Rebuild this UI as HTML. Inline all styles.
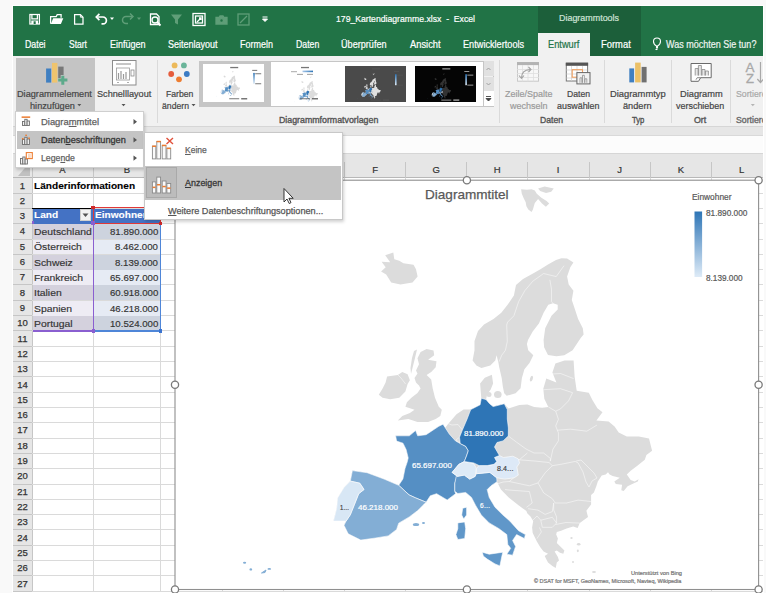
<!DOCTYPE html><html><head><meta charset="utf-8"><style>
html,body{margin:0;padding:0}
body{width:766px;height:593px;position:relative;overflow:hidden;background:#f9f9f9;font-family:"Liberation Sans",sans-serif}
div{box-sizing:border-box}
svg{position:absolute;left:0;top:0}
</style></head><body>
<div style="position:absolute;left:12px;top:5px;width:752px;height:588px;background:#ffffff;"></div>
<div style="position:absolute;left:13px;top:6px;width:750px;height:50px;background:#217346;"></div>
<div style="position:absolute;left:538px;top:6px;width:103px;height:50px;background:#1c5f3a;"></div>
<div style="position:absolute;left:538px;top:32.5px;width:52px;height:24px;background:#f1f1f1;"></div>
<div style="position:absolute;left:336.00px;top:13.74px;font-size:9.5px;line-height:9.5px;color:#ffffff;white-space:nowrap;transform-origin:0 0;transform:scaleX(0.9109);-webkit-text-stroke-width:0.2px;">179_Kartendiagramme.xlsx&nbsp; - &nbsp;Excel</div>
<div style="position:absolute;left:559.00px;top:13.79px;font-size:9px;line-height:9px;color:#cfe3d6;white-space:nowrap;transform-origin:0 0;transform:scaleX(0.9914);-webkit-text-stroke-width:0.2px;">Diagrammtools</div>
<div style="position:absolute;left:24.50px;top:39.90px;font-size:10.2px;line-height:10.2px;color:#ffffff;white-space:nowrap;transform-origin:0 0;transform:scaleX(0.8609);-webkit-text-stroke-width:0.2px;">Datei</div>
<div style="position:absolute;left:69.00px;top:39.90px;font-size:10.2px;line-height:10.2px;color:#ffffff;white-space:nowrap;transform-origin:0 0;transform:scaleX(0.8356);-webkit-text-stroke-width:0.2px;">Start</div>
<div style="position:absolute;left:109.60px;top:39.90px;font-size:10.2px;line-height:10.2px;color:#ffffff;white-space:nowrap;transform-origin:0 0;transform:scaleX(0.8841);-webkit-text-stroke-width:0.2px;">Einfügen</div>
<div style="position:absolute;left:167.80px;top:39.90px;font-size:10.2px;line-height:10.2px;color:#ffffff;white-space:nowrap;transform-origin:0 0;transform:scaleX(0.8817);-webkit-text-stroke-width:0.2px;">Seitenlayout</div>
<div style="position:absolute;left:240.00px;top:39.90px;font-size:10.2px;line-height:10.2px;color:#ffffff;white-space:nowrap;transform-origin:0 0;transform:scaleX(0.8821);-webkit-text-stroke-width:0.2px;">Formeln</div>
<div style="position:absolute;left:295.70px;top:39.90px;font-size:10.2px;line-height:10.2px;color:#ffffff;white-space:nowrap;transform-origin:0 0;transform:scaleX(0.8560);-webkit-text-stroke-width:0.2px;">Daten</div>
<div style="position:absolute;left:341.40px;top:39.90px;font-size:10.2px;line-height:10.2px;color:#ffffff;white-space:nowrap;transform-origin:0 0;transform:scaleX(0.8936);-webkit-text-stroke-width:0.2px;">Überprüfen</div>
<div style="position:absolute;left:410.00px;top:39.90px;font-size:10.2px;line-height:10.2px;color:#ffffff;white-space:nowrap;transform-origin:0 0;transform:scaleX(0.9148);-webkit-text-stroke-width:0.2px;">Ansicht</div>
<div style="position:absolute;left:462.80px;top:39.90px;font-size:10.2px;line-height:10.2px;color:#ffffff;white-space:nowrap;transform-origin:0 0;transform:scaleX(0.8997);-webkit-text-stroke-width:0.2px;">Entwicklertools</div>
<div style="position:absolute;left:601.00px;top:39.90px;font-size:10.2px;line-height:10.2px;color:#ffffff;white-space:nowrap;transform-origin:0 0;transform:scaleX(0.9225);-webkit-text-stroke-width:0.2px;">Format</div>
<div style="position:absolute;left:548.00px;top:39.90px;font-size:10.2px;line-height:10.2px;color:#217346;white-space:nowrap;transform-origin:0 0;transform:scaleX(0.9080);-webkit-text-stroke-width:0.2px;">Entwurf</div>
<div style="position:absolute;left:665.50px;top:39.90px;font-size:10.2px;line-height:10.2px;color:#eef4f0;white-space:nowrap;transform-origin:0 0;transform:scaleX(0.8852);-webkit-text-stroke-width:0.2px;">Was möchten Sie tun?</div>
<div style="position:absolute;left:13px;top:56px;width:750px;height:70px;background:#f1f1f1;"></div>
<div style="position:absolute;left:13px;top:125.5px;width:750px;height:1px;background:#d6d6d6;"></div>
<div style="position:absolute;left:13px;top:126.5px;width:750px;height:8px;background:#e6e6e6;"></div>
<div style="position:absolute;left:13px;top:134.5px;width:750px;height:1.5px;background:#d9d9d9;"></div>
<div style="position:absolute;left:13px;top:136px;width:750px;height:17px;background:#fcfcfc;"></div>
<div style="position:absolute;left:13px;top:153px;width:750px;height:1px;background:#d6d6d6;"></div>
<div style="position:absolute;left:13px;top:154px;width:750px;height:23px;background:#e6e6e6;"></div>
<div style="position:absolute;left:13px;top:177px;width:750px;height:1px;background:#b8b8b8;"></div>
<svg width="766" height="593" style="position:absolute;left:0;top:0">
<g fill="none" stroke="#ffffff" stroke-width="1.25">
 <rect x="29.9" y="14.5" width="9.5" height="9.5" />
 <path d="M31.9 14.5 v4.4 h5.5 v-4.4"/>
 <path d="M74.6 14.6 h5.8 l2.6 2.6 v6.8 h-8.4 z"/>
 <path d="M80.4 14.6 v2.6 h2.6" stroke-width="0.9"/>
 <path d="M97.3 17 h5.7 a3.4 3.4 0 0 1 0 6.8 h-1.5" stroke-width="1.7"/>
 <path d="M99.4 13.9 l-3.1 3.1 l3.1 3.1" stroke-width="1.7"/>
 <path d="M50.6 23.8 v-7.3 h5.6 l1 -1.8 h3.9 v3"/>
</g>
<rect x="31.3" y="20.5" width="6.7" height="3.5" fill="#fff"/>
<rect x="33.6" y="21.3" width="2.1" height="2.7" fill="#217346"/>
<path d="M50.8 24.1 L53.2 18.3 H63.3 L60.9 24.1 Z" fill="#fff"/>
<path d="M110 17.5 h4 l-2 2.5z" fill="#fff"/>
<g fill="none" stroke="#5f9e78" stroke-width="1.5">
 <path d="M132 16.5 h-6 a3.5 3.5 0 0 0 0 7 h2"/>
 <path d="M130 13.5 l3 3 l-3 3"/>
</g>
<path d="M137 17.5 h4 l-2 2.5z" fill="#5f9e78"/>
<g fill="none" stroke="#ffffff" stroke-width="1.3">
 <path d="M150.5 14 h6 l2.5 2.5 v8 h-8.5 z"/>
 <circle cx="155" cy="20" r="3"/>
 <path d="M157 22 l3.5 3.5" stroke-width="1.8"/>
 <rect x="193" y="13.5" width="12" height="12"/>
 <rect x="195.5" y="16" width="7" height="7"/>
 <path d="M197 22 l4 -4 M199 18 h2 v2"/>
</g>
<path d="M171 14.5 h11 l-4 5 v5 l-3 -1.5 v-3.5z" fill="#5f9e78"/>
<g fill="none" stroke="#5f9e78" stroke-width="1.3">
 <path d="M216 17.5 h3 l1 -1.5 h3 l1 1.5 h3 v6.5 h-11z" fill="#5f9e78"/>
 <circle cx="221.5" cy="20.5" r="1.9" fill="#217346"/>
 <rect x="238" y="14" width="11" height="11"/>
 <path d="M240 23 l7 -7"/>
</g>
<path d="M262.5 17 h5 M262.5 19 h5 l-2.5 2.5z" stroke="#fff" stroke-width="1" fill="#fff"/>
<!-- lightbulb -->
<g fill="none" stroke="#fff" stroke-width="1.1">
 <path d="M656.5 48 v-2 c-2 -1.2 -3 -2.8 -3 -4.5 a3.5 3.5 0 0 1 7 0 c0 1.7 -1 3.3 -3 4.5 v2 z"/>
 <path d="M655.5 49.5 h2"/>
</g>
</svg>
<div style="position:absolute;left:16px;top:58px;width:78.5px;height:53px;background:#c4c4c4;"></div>
<div style="position:absolute;left:156.5px;top:60px;width:1px;height:63px;background:#dadada;"></div>
<div style="position:absolute;left:499.2px;top:60px;width:1px;height:63px;background:#dadada;"></div>
<div style="position:absolute;left:604.2px;top:60px;width:1px;height:63px;background:#dadada;"></div>
<div style="position:absolute;left:671px;top:60px;width:1px;height:63px;background:#dadada;"></div>
<div style="position:absolute;left:730px;top:60px;width:1px;height:63px;background:#dadada;"></div>
<svg width="766" height="593" style="position:absolute;left:0;top:0">
 <rect x="46.1" y="68.5" width="5.1" height="14.1" fill="#3f7fc1"/>
 <rect x="52" y="62.9" width="5.4" height="19.7" fill="#efc46e"/>
 <rect x="58.2" y="66.6" width="5.4" height="12" fill="#787878"/>
 <path d="M62.8 75 v10 M57.7 80.1 h10.2" stroke="#c5c5c5" stroke-width="4.2"/>
 <path d="M62.8 75.8 v9 M58.2 80.1 h9.2" stroke="#5daa8b" stroke-width="3"/>
 <!-- Schnelllayout -->
 <rect x="112.5" y="60.5" width="23.5" height="24.5" fill="#fff" stroke="#8c8c8c" stroke-width="1"/>
 <path d="M116 64 h15" stroke="#8c8c8c" stroke-width="1"/>
 <rect x="116.5" y="68" width="13" height="12" fill="none" stroke="#9a9a9a" stroke-width="0.8"/>
 <path d="M118.5 79 v-6 M121 79 v-8 M123.5 79 v-5 M126 79 v-7" stroke="#9a9a9a" stroke-width="1.2"/>
 <rect x="131" y="70" width="3" height="6" fill="none" stroke="#8c8c8c" stroke-width="0.8"/>
 <path d="M117 82.5 h2 M127 82.5 h2" stroke="#999" stroke-width="0.8"/>
 <!-- Farben -->
 <circle cx="174.6" cy="65.4" r="2.9" fill="#ecb95a"/>
 <circle cx="183.9" cy="65.4" r="2.9" fill="#6bb59a"/>
 <circle cx="171.2" cy="74" r="2.9" fill="#e55c3c"/>
 <circle cx="186.8" cy="74" r="2.9" fill="#3c7cc4"/>
 <circle cx="179" cy="79.3" r="2.9" fill="#ed7d31"/>
 <!-- Zeile/Spalte disabled -->
 <rect x="517.5" y="62.6" width="21" height="18.6" fill="#f7f7f7" stroke="#c9c9c9" stroke-width="1"/>
 <rect x="517" y="62.1" width="22" height="3" fill="#b3b3b3"/>
 <path d="M517 69.5 h22 M517 73.5 h22 M517 77.5 h22 M522.5 65 v16.5 M528 65 v16.5 M533.5 65 v16.5" stroke="#dedede" stroke-width="0.8"/>
 <path d="M521.5 78 q0 -8 8.5 -8.5" fill="none" stroke="#a3a3a3" stroke-width="1.2"/>
 <path d="M528.5 67 l2.5 2.5 l-2.5 2.5 M519 75.5 l2.5 2.8 l2.5 -2.8" fill="none" stroke="#a3a3a3" stroke-width="1.1"/>
 <!-- Daten auswählen -->
 <rect x="566.3" y="63.2" width="21.3" height="17.8" fill="#fff" stroke="#777" stroke-width="1"/>
 <rect x="565.8" y="62.7" width="22.3" height="3.1" fill="#555"/>
 <path d="M566.3 70 h21 M566.3 74 h21 M566.3 78 h21 M571.5 66 v15 M577 66 v15 M582.5 66 v15" stroke="#cfcfcf" stroke-width="0.7"/>
 <rect x="572.2" y="69.7" width="10.3" height="7.5" fill="none" stroke="#f0a060" stroke-width="1.1"/>
 <rect x="576.9" y="72.6" width="13.1" height="11.3" fill="#f2f2f2" stroke="#666" stroke-width="1"/>
 <path d="M580 82.8 v-5 h1.8 v5 M582.5 82.8 v-7.5 h1.8 v7.5 M585 82.8 v-4 h1.8 v4" fill="#fff" stroke="#8a8a8a" stroke-width="0.8"/>
 <!-- Diagrammtyp -->
 <rect x="629.3" y="68.4" width="4.8" height="14" fill="#3f7fc1"/>
 <rect x="635.1" y="62.6" width="5.6" height="19.8" fill="#ebc067"/>
 <rect x="641.6" y="66.9" width="5" height="15.5" fill="#707070"/>
 <!-- Diagramm verschieben -->
 <path d="M691 63.5 h20.2 v14.2 h-10.5 l-2.2 3.6 h-7.5 z" fill="#fff" stroke="#6a6a6a" stroke-width="1" stroke-linejoin="round"/>
 <path d="M700.7 77.7 h-3.5 l-1.2 2" fill="none" stroke="#6a6a6a" stroke-width="0.8"/>
 <path d="M695.2 75.5 v-7 h3 v7 M698.4 75.5 v-10 h3 v10 M702 75.5 v-6 h3 v6 M705.4 75.5 v-4.5 h3 v4.5" fill="#e6e6e6" stroke="#8a8a8a" stroke-width="0.8"/>
 <!-- Sortieren -->
 <text x="745.6" y="71.6" font-size="13.5" fill="#a8a8a8" stroke="#a8a8a8" stroke-width="0.3" font-family="Liberation Sans">A</text>
 <text x="745.9" y="83" font-size="13" fill="#a8a8a8" stroke="#a8a8a8" stroke-width="0.3" font-family="Liberation Sans">Z</text>
 <path d="M760.5 62 v20.5 M757.3 79 l3.2 3.5 l3.2 -3.5" fill="none" stroke="#a8a8a8" stroke-width="1.2"/>
</svg>
<div style="position:absolute;left:199px;top:60.5px;width:295px;height:46px;background:#ffffff;border:1px solid #c6c6c6;"></div>
<div style="position:absolute;left:200px;top:61px;width:70.5px;height:45px;background:#c6c6c6;"></div>
<div style="position:absolute;left:203.2px;top:64.4px;width:61.3px;height:37.6px;background:#ffffff;"></div>
<svg width="766" height="593" style="position:absolute;left:0;top:0"><defs><linearGradient id="tg203" x1="0" y1="0" x2="0" y2="1"><stop offset="0" stop-color="#2e75b6"/><stop offset="1" stop-color="#deebf7"/></linearGradient></defs><rect x="230.2" y="66.9" width="8" height="1.3" fill="#555555" opacity="0.8"/><g transform="translate(200.25,58.66) scale(0.061,0.066)"><g fill="#d9d9d9" stroke="none"><path d="M521.1 189.2 L527.0 189.8 L531.6 189.2 L534.8 190.5 L536.8 193.7 L541.4 197.7 L546.6 200.9 L549.2 203.5 L545.9 206.8 L542.0 203.5 L538.1 199.0 L534.8 202.9 L532.9 209.4 L531.6 212.0 L528.3 209.4 L526.4 206.2 L525.7 202.2 L523.7 198.3 L521.8 193.7 Z"/><path d="M538.1 188.5 L544.6 186.6 L553.8 188.5 L551.2 191.8 L546.0 193.1 L540.1 191.1 Z"/><path d="M385.2 255.2 L393.3 252.6 L394.3 259.2 L399.3 260.7 L403.4 263.3 L413.5 264.8 L416.0 269.3 L417.6 276.4 L412.5 282.5 L400.4 284.5 L391.2 282.5 L386.2 274.4 L381.1 271.4 L385.7 267.3 L381.6 261.8 L390.2 262.3 Z"/><path d="M420.6 352.1 L426.6 349.1 L433.5 350.6 L434.2 355.2 L428.1 359.7 L436.5 361.3 L435.7 367.3 L431.2 371.9 L426.6 374.9 L431.2 379.5 L432.7 388.6 L435.0 397.7 L438.8 406.8 L441.8 409.8 L440.3 415.9 L435.7 419.0 L428.1 422.0 L417.5 422.0 L408.4 419.0 L397.8 420.5 L402.3 415.9 L409.9 412.9 L414.5 409.8 L405.4 406.8 L406.9 402.3 L411.4 397.7 L417.5 393.1 L420.6 388.6 L419.0 385.6 L416.0 382.5 L414.5 378.0 L417.5 373.4 L416.0 370.4 L419.0 364.3 L417.5 358.2 Z"/><path d="M387.1 376.4 L397.8 374.9 L402.3 371.9 L407.6 374.2 L409.9 380.2 L407.6 384.0 L405.4 391.6 L399.3 397.7 L390.2 399.2 L382.6 397.7 L378.8 394.7 L382.6 388.6 L385.6 382.5 Z"/><path d="M516.0 285.0 L523.0 279.0 L533.0 273.5 L540.0 269.5 L548.0 264.5 L556.0 260.0 L561.5 258.2 L567.1 258.6 L573.4 262.5 L570.3 267.2 L567.1 276.6 L568.7 284.5 L573.4 290.7 L571.8 300.1 L575.0 309.5 L578.1 318.9 L582.8 328.3 L583.6 334.6 L580.7 338.0 L572.6 350.2 L564.3 355.3 L556.4 356.3 L548.0 355.0 L544.1 347.2 L543.6 339.9 L545.2 328.3 L551.5 315.8 L557.7 309.5 L557.7 304.8 L553.0 303.3 L548.3 304.8 L543.6 312.7 L538.9 323.6 L532.7 331.5 L528.0 339.9 L526.9 344.0 L528.2 350.3 L533.3 355.3 L529.5 362.9 L524.4 369.2 L521.9 378.1 L520.6 388.2 L515.6 393.3 L506.7 395.8 L504.2 393.3 L502.9 386.9 L501.7 378.1 L499.1 366.7 L498.5 362.9 L496.6 355.3 L495.3 360.4 L490.3 365.4 L481.4 368.0 L476.4 365.4 L472.6 360.4 L474.5 350.3 L474.5 341.0 L478.0 331.0 L484.0 324.5 L493.5 318.9 L501.3 312.7 L507.6 304.8 L513.9 295.4 Z"/><path d="M443.5 430.0 L448.3 423.7 L456.5 414.3 L463.6 409.6 L470.7 409.6 L475.4 407.2 L480.1 404.8 L481.3 398.3 L480.1 383.6 L484.8 377.7 L491.9 374.7 L493.1 383.6 L490.7 389.5 L487.2 394.2 L486.0 399.5 L489.6 403.7 L493.1 406.6 L500.2 404.8 L504.3 403.7 L508.5 408.5 L519.3 405.1 L527.4 404.4 L534.1 407.1 L542.2 407.8 L548.3 406.9 L544.3 398.8 L543.3 388.7 L546.3 378.6 L556.4 382.6 L552.4 372.5 L555.4 363.4 L564.5 360.4 L573.6 360.4 L574.6 376.5 L576.7 390.7 L588.8 392.7 L592.4 400.1 L597.4 408.2 L602.5 412.3 L596.4 420.4 L608.6 421.4 L614.6 426.4 L618.7 432.5 L626.8 436.5 L638.9 436.5 L649.0 438.6 L652.1 450.7 L646.4 455.0 L644.8 459.7 L637.0 466.0 L630.7 470.7 L626.8 474.6 L630.7 480.1 L634.6 481.6 L638.6 479.3 L637.8 481.6 L633.9 483.2 L627.6 486.3 L623.7 491.0 L621.3 490.2 L622.1 484.8 L615.8 484.0 L614.3 481.6 L619.8 477.7 L612.7 476.1 L609.6 474.6 L608.0 472.2 L605.7 474.6 L601.7 475.4 L597.8 481.6 L596.3 486.3 L593.9 492.6 L591.1 495.0 L591.1 504.4 L586.4 510.7 L588.0 516.9 L579.8 523.1 L577.6 528.1 L573.2 526.4 L566.6 528.6 L561.1 530.8 L556.8 531.9 L556.2 534.6 L557.9 538.5 L556.8 542.9 L561.1 547.2 L564.4 550.5 L563.3 553.8 L560.0 552.7 L556.8 550.5 L554.6 551.6 L557.9 557.1 L559.0 560.4 L556.8 562.6 L555.7 568.0 L552.4 565.9 L548.0 562.6 L545.8 558.2 L544.7 556.0 L548.0 553.8 L543.6 551.6 L540.3 547.2 L537.0 541.8 L534.9 537.4 L532.7 533.0 L532.1 527.5 L533.2 521.0 L530.5 516.6 L527.2 513.3 L526.4 511.1 L518.5 505.2 L508.7 497.4 L500.9 489.6 L497.0 481.7 L491.1 485.7 L487.2 489.6 L489.2 497.4 L495.0 507.2 L502.9 515.0 L509.7 520.9 L518.5 530.7 L525.4 534.6 L524.4 538.5 L516.6 534.6 L512.6 540.5 L515.6 546.4 L512.6 555.2 L506.8 554.2 L510.7 548.3 L507.8 544.4 L506.8 534.6 L499.0 528.7 L489.2 522.9 L481.3 515.0 L475.5 505.2 L471.5 497.4 L465.7 492.5 L457.8 493.5 L454.8 491.3 L455.6 493.7 L447.2 500.0 L436.6 493.7 L430.3 495.8 L426.1 502.2 L424.0 504.3 L417.7 510.6 L409.3 516.9 L398.7 523.2 L396.6 529.5 L388.2 535.9 L375.6 538.0 L360.8 540.1 L348.2 533.8 L344.0 525.3 L346.1 521.1 L333.4 521.1 L336.6 508.5 L337.6 497.9 L344.0 487.4 L350.3 481.1 L352.4 470.6 L367.1 472.7 L384.0 479.0 L398.7 485.3 L402.9 479.0 L405.0 468.5 L407.2 462.1 L408.2 457.9 L406.1 449.5 L403.0 443.2 L396.6 441.1 L395.6 435.8 L409.3 435.8 L415.6 430.5 L417.7 435.8 L426.1 434.7 L438.8 426.3 L443.0 424.2 Z"/><ellipse cx="489" cy="394.5" rx="2.5" ry="2.5"/><ellipse cx="497.8" cy="394.5" rx="3.8" ry="3.6"/><ellipse cx="531.4" cy="378.7" rx="1.4" ry="3" transform="rotate(20 531.4 378.7)"/><path d="M414 351 L417 349.5 L414.5 360 L412.5 368 L411 374 L410.5 368 L412 358Z"/><ellipse cx="578.7" cy="544.3" rx="1.8" ry="1.2"/><ellipse cx="577.8" cy="550.8" rx="1" ry="1.4"/><ellipse cx="571.5" cy="538" rx="1.2" ry="0.9"/><ellipse cx="594" cy="572" rx="2" ry="1"/><ellipse cx="573" cy="562" rx="1" ry="1"/></g><g stroke="#ffffff" stroke-width="2" stroke-linejoin="round"><path d="M395.6 435.8 L409.3 435.8 L415.6 430.5 L417.7 435.8 L426.1 434.7 L438.8 426.3 L443.0 424.2 L449.3 434.0 L455.6 441.0 L460.2 443.5 L465.7 446.3 L468.3 450.8 L466.5 456.0 L464.3 461.6 L458.9 464.3 L452.1 472.4 L457.5 476.4 L454.8 483.2 L454.8 491.3 L455.6 493.7 L447.2 500.0 L436.6 493.7 L430.3 495.8 L426.1 502.2 L415.6 497.9 L409.1 494.9 L398.7 485.3 L402.9 479.0 L405.0 468.5 L407.2 462.1 L408.2 457.9 L406.1 449.5 L403.0 443.2 L396.6 441.1 Z" fill="#558fc4"/><path d="M352.4 470.6 L367.1 472.7 L384.0 479.0 L398.7 485.3 L409.1 494.9 L415.6 497.9 L426.1 502.2 L424.0 504.3 L417.7 510.6 L409.3 516.9 L398.7 523.2 L396.6 529.5 L388.2 535.9 L375.6 538.0 L360.8 540.1 L348.2 533.8 L344.0 525.3 L346.1 521.1 L350.3 514.8 L354.5 504.3 L358.7 493.7 L364.0 489.5 L359.8 483.2 L350.3 481.1 Z" fill="#83aed5"/><path d="M350.3 481.1 L359.8 483.2 L364.0 489.5 L358.7 493.7 L354.5 504.3 L350.3 514.8 L346.1 521.1 L333.4 521.1 L336.6 508.5 L337.6 497.9 L344.0 487.4 Z" fill="#d8e7f5"/><path d="M456.2 476.4 L464.3 475.1 L469.7 479.1 L475.1 476.4 L476.4 473.7 L489.9 472.4 L496.7 477.8 L497.0 481.7 L491.1 485.7 L487.2 489.6 L489.2 497.4 L495.0 507.2 L502.9 515.0 L509.7 520.9 L518.5 530.7 L525.4 534.6 L524.4 538.5 L516.6 534.6 L512.6 540.5 L515.6 546.4 L512.6 555.2 L506.8 554.2 L510.7 548.3 L507.8 544.4 L506.8 534.6 L499.0 528.7 L489.2 522.9 L481.3 515.0 L475.5 505.2 L471.5 497.4 L465.7 492.5 L457.8 493.5 L454.8 491.3 L454.8 483.2 Z" fill="#6097c9"/><path d="M482.3 552.2 L489.2 554.2 L502.9 552.2 L501.9 556.1 L499.9 565.9 L495.0 563.9 L487.2 559.1 L483.3 556.1 Z" fill="#6097c9"/><path d="M457.8 522.9 L464.7 521.9 L465.7 528.7 L464.7 538.5 L457.8 539.5 L455.9 534.6 L457.8 528.7 Z" fill="#6097c9"/><path d="M462.7 508.2 L466.6 507.2 L466.6 515.0 L463.7 518.9 L461.7 515.0 Z" fill="#6097c9"/><path d="M452.1 472.4 L458.9 464.3 L464.3 461.6 L473.7 463.6 L476.4 468.3 L475.1 476.4 L469.7 479.1 L464.3 475.1 L457.5 476.4 Z" fill="#deebf7"/><path d="M476.4 468.3 L479.1 465.6 L487.2 465.6 L494.0 464.3 L496.7 461.6 L494.5 457.5 L499.4 455.5 L503.4 457.5 L512.9 456.2 L518.3 458.9 L519.6 462.9 L516.9 467.0 L518.3 475.1 L514.2 477.8 L504.8 479.1 L496.7 477.8 L489.9 472.4 L476.4 473.7 Z" fill="#dde9f7"/><path d="M470.7 409.6 L475.4 407.2 L480.1 404.8 L481.3 398.3 L486.0 399.5 L489.6 403.7 L493.1 406.6 L500.2 404.8 L504.3 403.7 L507.3 409.6 L507.3 419.0 L508.4 428.0 L508.3 436.0 L503.1 440.9 L497.0 442.5 L494.5 447.0 L499.4 455.5 L494.5 457.5 L496.7 461.6 L494.0 464.3 L487.2 465.6 L479.1 465.6 L473.7 462.9 L464.3 461.6 L466.5 456.0 L468.3 450.8 L465.7 446.3 L460.2 443.5 L459.5 437.2 L462.4 430.0 L467.1 419.0 Z" fill="#2e75b6"/></g><g fill="#83aed5"><ellipse cx="416" cy="524.5" rx="3.2" ry="1.6"/><ellipse cx="423.5" cy="523" rx="1.5" ry="1"/><ellipse cx="244.6" cy="562.8" rx="1.6" ry="1"/><ellipse cx="250.8" cy="569.4" rx="1.3" ry="1.2"/><path d="M261.5 573 L266 570 L265 572.5Z" stroke="#83aed5" stroke-width="1"/><ellipse cx="269.3" cy="568.9" rx="1.8" ry="0.9"/></g></g><rect x="253.2" y="72.9" width="1.6" height="11" fill="url(#tg203)"/><rect x="252.2" y="69.9" width="5" height="0.8" fill="#555555"/><rect x="255.2" y="73.4" width="6" height="0.8" fill="#555555"/><rect x="255.2" y="83.4" width="6" height="0.8" fill="#555555"/><rect x="229.2" y="98.4" width="10" height="0.8" fill="#555555"/><rect x="241.2" y="98.2" width="6" height="1.2" fill="#555555"/></svg>
<svg width="766" height="593" style="position:absolute;left:0;top:0"><defs><linearGradient id="tg274" x1="0" y1="0" x2="1" y2="0"><stop offset="0" stop-color="#a9c8ea"/><stop offset="1" stop-color="#2e75b6"/></linearGradient></defs><rect x="301" y="66.9" width="8" height="1.3" fill="#555555" opacity="0.8"/><g transform="translate(278.05,64.16) scale(0.061,0.066)"><g fill="#dcdcdc" stroke="none"><path d="M521.1 189.2 L527.0 189.8 L531.6 189.2 L534.8 190.5 L536.8 193.7 L541.4 197.7 L546.6 200.9 L549.2 203.5 L545.9 206.8 L542.0 203.5 L538.1 199.0 L534.8 202.9 L532.9 209.4 L531.6 212.0 L528.3 209.4 L526.4 206.2 L525.7 202.2 L523.7 198.3 L521.8 193.7 Z"/><path d="M538.1 188.5 L544.6 186.6 L553.8 188.5 L551.2 191.8 L546.0 193.1 L540.1 191.1 Z"/><path d="M385.2 255.2 L393.3 252.6 L394.3 259.2 L399.3 260.7 L403.4 263.3 L413.5 264.8 L416.0 269.3 L417.6 276.4 L412.5 282.5 L400.4 284.5 L391.2 282.5 L386.2 274.4 L381.1 271.4 L385.7 267.3 L381.6 261.8 L390.2 262.3 Z"/><path d="M420.6 352.1 L426.6 349.1 L433.5 350.6 L434.2 355.2 L428.1 359.7 L436.5 361.3 L435.7 367.3 L431.2 371.9 L426.6 374.9 L431.2 379.5 L432.7 388.6 L435.0 397.7 L438.8 406.8 L441.8 409.8 L440.3 415.9 L435.7 419.0 L428.1 422.0 L417.5 422.0 L408.4 419.0 L397.8 420.5 L402.3 415.9 L409.9 412.9 L414.5 409.8 L405.4 406.8 L406.9 402.3 L411.4 397.7 L417.5 393.1 L420.6 388.6 L419.0 385.6 L416.0 382.5 L414.5 378.0 L417.5 373.4 L416.0 370.4 L419.0 364.3 L417.5 358.2 Z"/><path d="M387.1 376.4 L397.8 374.9 L402.3 371.9 L407.6 374.2 L409.9 380.2 L407.6 384.0 L405.4 391.6 L399.3 397.7 L390.2 399.2 L382.6 397.7 L378.8 394.7 L382.6 388.6 L385.6 382.5 Z"/><path d="M516.0 285.0 L523.0 279.0 L533.0 273.5 L540.0 269.5 L548.0 264.5 L556.0 260.0 L561.5 258.2 L567.1 258.6 L573.4 262.5 L570.3 267.2 L567.1 276.6 L568.7 284.5 L573.4 290.7 L571.8 300.1 L575.0 309.5 L578.1 318.9 L582.8 328.3 L583.6 334.6 L580.7 338.0 L572.6 350.2 L564.3 355.3 L556.4 356.3 L548.0 355.0 L544.1 347.2 L543.6 339.9 L545.2 328.3 L551.5 315.8 L557.7 309.5 L557.7 304.8 L553.0 303.3 L548.3 304.8 L543.6 312.7 L538.9 323.6 L532.7 331.5 L528.0 339.9 L526.9 344.0 L528.2 350.3 L533.3 355.3 L529.5 362.9 L524.4 369.2 L521.9 378.1 L520.6 388.2 L515.6 393.3 L506.7 395.8 L504.2 393.3 L502.9 386.9 L501.7 378.1 L499.1 366.7 L498.5 362.9 L496.6 355.3 L495.3 360.4 L490.3 365.4 L481.4 368.0 L476.4 365.4 L472.6 360.4 L474.5 350.3 L474.5 341.0 L478.0 331.0 L484.0 324.5 L493.5 318.9 L501.3 312.7 L507.6 304.8 L513.9 295.4 Z"/><path d="M443.5 430.0 L448.3 423.7 L456.5 414.3 L463.6 409.6 L470.7 409.6 L475.4 407.2 L480.1 404.8 L481.3 398.3 L480.1 383.6 L484.8 377.7 L491.9 374.7 L493.1 383.6 L490.7 389.5 L487.2 394.2 L486.0 399.5 L489.6 403.7 L493.1 406.6 L500.2 404.8 L504.3 403.7 L508.5 408.5 L519.3 405.1 L527.4 404.4 L534.1 407.1 L542.2 407.8 L548.3 406.9 L544.3 398.8 L543.3 388.7 L546.3 378.6 L556.4 382.6 L552.4 372.5 L555.4 363.4 L564.5 360.4 L573.6 360.4 L574.6 376.5 L576.7 390.7 L588.8 392.7 L592.4 400.1 L597.4 408.2 L602.5 412.3 L596.4 420.4 L608.6 421.4 L614.6 426.4 L618.7 432.5 L626.8 436.5 L638.9 436.5 L649.0 438.6 L652.1 450.7 L646.4 455.0 L644.8 459.7 L637.0 466.0 L630.7 470.7 L626.8 474.6 L630.7 480.1 L634.6 481.6 L638.6 479.3 L637.8 481.6 L633.9 483.2 L627.6 486.3 L623.7 491.0 L621.3 490.2 L622.1 484.8 L615.8 484.0 L614.3 481.6 L619.8 477.7 L612.7 476.1 L609.6 474.6 L608.0 472.2 L605.7 474.6 L601.7 475.4 L597.8 481.6 L596.3 486.3 L593.9 492.6 L591.1 495.0 L591.1 504.4 L586.4 510.7 L588.0 516.9 L579.8 523.1 L577.6 528.1 L573.2 526.4 L566.6 528.6 L561.1 530.8 L556.8 531.9 L556.2 534.6 L557.9 538.5 L556.8 542.9 L561.1 547.2 L564.4 550.5 L563.3 553.8 L560.0 552.7 L556.8 550.5 L554.6 551.6 L557.9 557.1 L559.0 560.4 L556.8 562.6 L555.7 568.0 L552.4 565.9 L548.0 562.6 L545.8 558.2 L544.7 556.0 L548.0 553.8 L543.6 551.6 L540.3 547.2 L537.0 541.8 L534.9 537.4 L532.7 533.0 L532.1 527.5 L533.2 521.0 L530.5 516.6 L527.2 513.3 L526.4 511.1 L518.5 505.2 L508.7 497.4 L500.9 489.6 L497.0 481.7 L491.1 485.7 L487.2 489.6 L489.2 497.4 L495.0 507.2 L502.9 515.0 L509.7 520.9 L518.5 530.7 L525.4 534.6 L524.4 538.5 L516.6 534.6 L512.6 540.5 L515.6 546.4 L512.6 555.2 L506.8 554.2 L510.7 548.3 L507.8 544.4 L506.8 534.6 L499.0 528.7 L489.2 522.9 L481.3 515.0 L475.5 505.2 L471.5 497.4 L465.7 492.5 L457.8 493.5 L454.8 491.3 L455.6 493.7 L447.2 500.0 L436.6 493.7 L430.3 495.8 L426.1 502.2 L424.0 504.3 L417.7 510.6 L409.3 516.9 L398.7 523.2 L396.6 529.5 L388.2 535.9 L375.6 538.0 L360.8 540.1 L348.2 533.8 L344.0 525.3 L346.1 521.1 L333.4 521.1 L336.6 508.5 L337.6 497.9 L344.0 487.4 L350.3 481.1 L352.4 470.6 L367.1 472.7 L384.0 479.0 L398.7 485.3 L402.9 479.0 L405.0 468.5 L407.2 462.1 L408.2 457.9 L406.1 449.5 L403.0 443.2 L396.6 441.1 L395.6 435.8 L409.3 435.8 L415.6 430.5 L417.7 435.8 L426.1 434.7 L438.8 426.3 L443.0 424.2 Z"/><ellipse cx="489" cy="394.5" rx="2.5" ry="2.5"/><ellipse cx="497.8" cy="394.5" rx="3.8" ry="3.6"/><ellipse cx="531.4" cy="378.7" rx="1.4" ry="3" transform="rotate(20 531.4 378.7)"/><path d="M414 351 L417 349.5 L414.5 360 L412.5 368 L411 374 L410.5 368 L412 358Z"/><ellipse cx="578.7" cy="544.3" rx="1.8" ry="1.2"/><ellipse cx="577.8" cy="550.8" rx="1" ry="1.4"/><ellipse cx="571.5" cy="538" rx="1.2" ry="0.9"/><ellipse cx="594" cy="572" rx="2" ry="1"/><ellipse cx="573" cy="562" rx="1" ry="1"/></g><g stroke="#ffffff" stroke-width="2" stroke-linejoin="round"><path d="M395.6 435.8 L409.3 435.8 L415.6 430.5 L417.7 435.8 L426.1 434.7 L438.8 426.3 L443.0 424.2 L449.3 434.0 L455.6 441.0 L460.2 443.5 L465.7 446.3 L468.3 450.8 L466.5 456.0 L464.3 461.6 L458.9 464.3 L452.1 472.4 L457.5 476.4 L454.8 483.2 L454.8 491.3 L455.6 493.7 L447.2 500.0 L436.6 493.7 L430.3 495.8 L426.1 502.2 L415.6 497.9 L409.1 494.9 L398.7 485.3 L402.9 479.0 L405.0 468.5 L407.2 462.1 L408.2 457.9 L406.1 449.5 L403.0 443.2 L396.6 441.1 Z" fill="#558fc4"/><path d="M352.4 470.6 L367.1 472.7 L384.0 479.0 L398.7 485.3 L409.1 494.9 L415.6 497.9 L426.1 502.2 L424.0 504.3 L417.7 510.6 L409.3 516.9 L398.7 523.2 L396.6 529.5 L388.2 535.9 L375.6 538.0 L360.8 540.1 L348.2 533.8 L344.0 525.3 L346.1 521.1 L350.3 514.8 L354.5 504.3 L358.7 493.7 L364.0 489.5 L359.8 483.2 L350.3 481.1 Z" fill="#83aed5"/><path d="M350.3 481.1 L359.8 483.2 L364.0 489.5 L358.7 493.7 L354.5 504.3 L350.3 514.8 L346.1 521.1 L333.4 521.1 L336.6 508.5 L337.6 497.9 L344.0 487.4 Z" fill="#d8e7f5"/><path d="M456.2 476.4 L464.3 475.1 L469.7 479.1 L475.1 476.4 L476.4 473.7 L489.9 472.4 L496.7 477.8 L497.0 481.7 L491.1 485.7 L487.2 489.6 L489.2 497.4 L495.0 507.2 L502.9 515.0 L509.7 520.9 L518.5 530.7 L525.4 534.6 L524.4 538.5 L516.6 534.6 L512.6 540.5 L515.6 546.4 L512.6 555.2 L506.8 554.2 L510.7 548.3 L507.8 544.4 L506.8 534.6 L499.0 528.7 L489.2 522.9 L481.3 515.0 L475.5 505.2 L471.5 497.4 L465.7 492.5 L457.8 493.5 L454.8 491.3 L454.8 483.2 Z" fill="#6097c9"/><path d="M482.3 552.2 L489.2 554.2 L502.9 552.2 L501.9 556.1 L499.9 565.9 L495.0 563.9 L487.2 559.1 L483.3 556.1 Z" fill="#6097c9"/><path d="M457.8 522.9 L464.7 521.9 L465.7 528.7 L464.7 538.5 L457.8 539.5 L455.9 534.6 L457.8 528.7 Z" fill="#6097c9"/><path d="M462.7 508.2 L466.6 507.2 L466.6 515.0 L463.7 518.9 L461.7 515.0 Z" fill="#6097c9"/><path d="M452.1 472.4 L458.9 464.3 L464.3 461.6 L473.7 463.6 L476.4 468.3 L475.1 476.4 L469.7 479.1 L464.3 475.1 L457.5 476.4 Z" fill="#deebf7"/><path d="M476.4 468.3 L479.1 465.6 L487.2 465.6 L494.0 464.3 L496.7 461.6 L494.5 457.5 L499.4 455.5 L503.4 457.5 L512.9 456.2 L518.3 458.9 L519.6 462.9 L516.9 467.0 L518.3 475.1 L514.2 477.8 L504.8 479.1 L496.7 477.8 L489.9 472.4 L476.4 473.7 Z" fill="#dde9f7"/><path d="M470.7 409.6 L475.4 407.2 L480.1 404.8 L481.3 398.3 L486.0 399.5 L489.6 403.7 L493.1 406.6 L500.2 404.8 L504.3 403.7 L507.3 409.6 L507.3 419.0 L508.4 428.0 L508.3 436.0 L503.1 440.9 L497.0 442.5 L494.5 447.0 L499.4 455.5 L494.5 457.5 L496.7 461.6 L494.0 464.3 L487.2 465.6 L479.1 465.6 L473.7 462.9 L464.3 461.6 L466.5 456.0 L468.3 450.8 L465.7 446.3 L460.2 443.5 L459.5 437.2 L462.4 430.0 L467.1 419.0 Z" fill="#2e75b6"/></g><g fill="#83aed5"><ellipse cx="416" cy="524.5" rx="3.2" ry="1.6"/><ellipse cx="423.5" cy="523" rx="1.5" ry="1"/><ellipse cx="244.6" cy="562.8" rx="1.6" ry="1"/><ellipse cx="250.8" cy="569.4" rx="1.3" ry="1.2"/><path d="M261.5 573 L266 570 L265 572.5Z" stroke="#83aed5" stroke-width="1"/><ellipse cx="269.3" cy="568.9" rx="1.8" ry="0.9"/></g></g><rect x="302.5" y="70.60000000000001" width="10.5" height="1.6" fill="url(#tg274)"/><rect x="291" y="71.2" width="6" height="1" fill="#aaa"/><rect x="297" y="73.9" width="6" height="0.8" fill="#888"/><rect x="307" y="73.9" width="6" height="0.8" fill="#888"/><rect x="300" y="98.4" width="10" height="0.8" fill="#555555"/><rect x="312" y="98.2" width="6" height="1.2" fill="#555555"/></svg>
<div style="position:absolute;left:345px;top:65.7px;width:60.6px;height:36px;background:#4a4a4a;"></div>
<svg width="766" height="593" style="position:absolute;left:0;top:0"><defs><linearGradient id="tg345" x1="0" y1="0" x2="0" y2="1"><stop offset="0" stop-color="#2e75b6"/><stop offset="1" stop-color="#deebf7"/></linearGradient></defs><rect x="372" y="68.2" width="8" height="1.3" fill="#555555" opacity="0.8"/><g transform="translate(340.95,61.16) scale(0.061,0.066)"><g fill="#e0e0e0" stroke="none"><path d="M521.1 189.2 L527.0 189.8 L531.6 189.2 L534.8 190.5 L536.8 193.7 L541.4 197.7 L546.6 200.9 L549.2 203.5 L545.9 206.8 L542.0 203.5 L538.1 199.0 L534.8 202.9 L532.9 209.4 L531.6 212.0 L528.3 209.4 L526.4 206.2 L525.7 202.2 L523.7 198.3 L521.8 193.7 Z"/><path d="M538.1 188.5 L544.6 186.6 L553.8 188.5 L551.2 191.8 L546.0 193.1 L540.1 191.1 Z"/><path d="M385.2 255.2 L393.3 252.6 L394.3 259.2 L399.3 260.7 L403.4 263.3 L413.5 264.8 L416.0 269.3 L417.6 276.4 L412.5 282.5 L400.4 284.5 L391.2 282.5 L386.2 274.4 L381.1 271.4 L385.7 267.3 L381.6 261.8 L390.2 262.3 Z"/><path d="M420.6 352.1 L426.6 349.1 L433.5 350.6 L434.2 355.2 L428.1 359.7 L436.5 361.3 L435.7 367.3 L431.2 371.9 L426.6 374.9 L431.2 379.5 L432.7 388.6 L435.0 397.7 L438.8 406.8 L441.8 409.8 L440.3 415.9 L435.7 419.0 L428.1 422.0 L417.5 422.0 L408.4 419.0 L397.8 420.5 L402.3 415.9 L409.9 412.9 L414.5 409.8 L405.4 406.8 L406.9 402.3 L411.4 397.7 L417.5 393.1 L420.6 388.6 L419.0 385.6 L416.0 382.5 L414.5 378.0 L417.5 373.4 L416.0 370.4 L419.0 364.3 L417.5 358.2 Z"/><path d="M387.1 376.4 L397.8 374.9 L402.3 371.9 L407.6 374.2 L409.9 380.2 L407.6 384.0 L405.4 391.6 L399.3 397.7 L390.2 399.2 L382.6 397.7 L378.8 394.7 L382.6 388.6 L385.6 382.5 Z"/><path d="M516.0 285.0 L523.0 279.0 L533.0 273.5 L540.0 269.5 L548.0 264.5 L556.0 260.0 L561.5 258.2 L567.1 258.6 L573.4 262.5 L570.3 267.2 L567.1 276.6 L568.7 284.5 L573.4 290.7 L571.8 300.1 L575.0 309.5 L578.1 318.9 L582.8 328.3 L583.6 334.6 L580.7 338.0 L572.6 350.2 L564.3 355.3 L556.4 356.3 L548.0 355.0 L544.1 347.2 L543.6 339.9 L545.2 328.3 L551.5 315.8 L557.7 309.5 L557.7 304.8 L553.0 303.3 L548.3 304.8 L543.6 312.7 L538.9 323.6 L532.7 331.5 L528.0 339.9 L526.9 344.0 L528.2 350.3 L533.3 355.3 L529.5 362.9 L524.4 369.2 L521.9 378.1 L520.6 388.2 L515.6 393.3 L506.7 395.8 L504.2 393.3 L502.9 386.9 L501.7 378.1 L499.1 366.7 L498.5 362.9 L496.6 355.3 L495.3 360.4 L490.3 365.4 L481.4 368.0 L476.4 365.4 L472.6 360.4 L474.5 350.3 L474.5 341.0 L478.0 331.0 L484.0 324.5 L493.5 318.9 L501.3 312.7 L507.6 304.8 L513.9 295.4 Z"/><path d="M443.5 430.0 L448.3 423.7 L456.5 414.3 L463.6 409.6 L470.7 409.6 L475.4 407.2 L480.1 404.8 L481.3 398.3 L480.1 383.6 L484.8 377.7 L491.9 374.7 L493.1 383.6 L490.7 389.5 L487.2 394.2 L486.0 399.5 L489.6 403.7 L493.1 406.6 L500.2 404.8 L504.3 403.7 L508.5 408.5 L519.3 405.1 L527.4 404.4 L534.1 407.1 L542.2 407.8 L548.3 406.9 L544.3 398.8 L543.3 388.7 L546.3 378.6 L556.4 382.6 L552.4 372.5 L555.4 363.4 L564.5 360.4 L573.6 360.4 L574.6 376.5 L576.7 390.7 L588.8 392.7 L592.4 400.1 L597.4 408.2 L602.5 412.3 L596.4 420.4 L608.6 421.4 L614.6 426.4 L618.7 432.5 L626.8 436.5 L638.9 436.5 L649.0 438.6 L652.1 450.7 L646.4 455.0 L644.8 459.7 L637.0 466.0 L630.7 470.7 L626.8 474.6 L630.7 480.1 L634.6 481.6 L638.6 479.3 L637.8 481.6 L633.9 483.2 L627.6 486.3 L623.7 491.0 L621.3 490.2 L622.1 484.8 L615.8 484.0 L614.3 481.6 L619.8 477.7 L612.7 476.1 L609.6 474.6 L608.0 472.2 L605.7 474.6 L601.7 475.4 L597.8 481.6 L596.3 486.3 L593.9 492.6 L591.1 495.0 L591.1 504.4 L586.4 510.7 L588.0 516.9 L579.8 523.1 L577.6 528.1 L573.2 526.4 L566.6 528.6 L561.1 530.8 L556.8 531.9 L556.2 534.6 L557.9 538.5 L556.8 542.9 L561.1 547.2 L564.4 550.5 L563.3 553.8 L560.0 552.7 L556.8 550.5 L554.6 551.6 L557.9 557.1 L559.0 560.4 L556.8 562.6 L555.7 568.0 L552.4 565.9 L548.0 562.6 L545.8 558.2 L544.7 556.0 L548.0 553.8 L543.6 551.6 L540.3 547.2 L537.0 541.8 L534.9 537.4 L532.7 533.0 L532.1 527.5 L533.2 521.0 L530.5 516.6 L527.2 513.3 L526.4 511.1 L518.5 505.2 L508.7 497.4 L500.9 489.6 L497.0 481.7 L491.1 485.7 L487.2 489.6 L489.2 497.4 L495.0 507.2 L502.9 515.0 L509.7 520.9 L518.5 530.7 L525.4 534.6 L524.4 538.5 L516.6 534.6 L512.6 540.5 L515.6 546.4 L512.6 555.2 L506.8 554.2 L510.7 548.3 L507.8 544.4 L506.8 534.6 L499.0 528.7 L489.2 522.9 L481.3 515.0 L475.5 505.2 L471.5 497.4 L465.7 492.5 L457.8 493.5 L454.8 491.3 L455.6 493.7 L447.2 500.0 L436.6 493.7 L430.3 495.8 L426.1 502.2 L424.0 504.3 L417.7 510.6 L409.3 516.9 L398.7 523.2 L396.6 529.5 L388.2 535.9 L375.6 538.0 L360.8 540.1 L348.2 533.8 L344.0 525.3 L346.1 521.1 L333.4 521.1 L336.6 508.5 L337.6 497.9 L344.0 487.4 L350.3 481.1 L352.4 470.6 L367.1 472.7 L384.0 479.0 L398.7 485.3 L402.9 479.0 L405.0 468.5 L407.2 462.1 L408.2 457.9 L406.1 449.5 L403.0 443.2 L396.6 441.1 L395.6 435.8 L409.3 435.8 L415.6 430.5 L417.7 435.8 L426.1 434.7 L438.8 426.3 L443.0 424.2 Z"/><ellipse cx="489" cy="394.5" rx="2.5" ry="2.5"/><ellipse cx="497.8" cy="394.5" rx="3.8" ry="3.6"/><ellipse cx="531.4" cy="378.7" rx="1.4" ry="3" transform="rotate(20 531.4 378.7)"/><path d="M414 351 L417 349.5 L414.5 360 L412.5 368 L411 374 L410.5 368 L412 358Z"/><ellipse cx="578.7" cy="544.3" rx="1.8" ry="1.2"/><ellipse cx="577.8" cy="550.8" rx="1" ry="1.4"/><ellipse cx="571.5" cy="538" rx="1.2" ry="0.9"/><ellipse cx="594" cy="572" rx="2" ry="1"/><ellipse cx="573" cy="562" rx="1" ry="1"/></g><g stroke="#4a4a4a" stroke-width="2" stroke-linejoin="round"><path d="M395.6 435.8 L409.3 435.8 L415.6 430.5 L417.7 435.8 L426.1 434.7 L438.8 426.3 L443.0 424.2 L449.3 434.0 L455.6 441.0 L460.2 443.5 L465.7 446.3 L468.3 450.8 L466.5 456.0 L464.3 461.6 L458.9 464.3 L452.1 472.4 L457.5 476.4 L454.8 483.2 L454.8 491.3 L455.6 493.7 L447.2 500.0 L436.6 493.7 L430.3 495.8 L426.1 502.2 L415.6 497.9 L409.1 494.9 L398.7 485.3 L402.9 479.0 L405.0 468.5 L407.2 462.1 L408.2 457.9 L406.1 449.5 L403.0 443.2 L396.6 441.1 Z" fill="#558fc4"/><path d="M352.4 470.6 L367.1 472.7 L384.0 479.0 L398.7 485.3 L409.1 494.9 L415.6 497.9 L426.1 502.2 L424.0 504.3 L417.7 510.6 L409.3 516.9 L398.7 523.2 L396.6 529.5 L388.2 535.9 L375.6 538.0 L360.8 540.1 L348.2 533.8 L344.0 525.3 L346.1 521.1 L350.3 514.8 L354.5 504.3 L358.7 493.7 L364.0 489.5 L359.8 483.2 L350.3 481.1 Z" fill="#83aed5"/><path d="M350.3 481.1 L359.8 483.2 L364.0 489.5 L358.7 493.7 L354.5 504.3 L350.3 514.8 L346.1 521.1 L333.4 521.1 L336.6 508.5 L337.6 497.9 L344.0 487.4 Z" fill="#d8e7f5"/><path d="M456.2 476.4 L464.3 475.1 L469.7 479.1 L475.1 476.4 L476.4 473.7 L489.9 472.4 L496.7 477.8 L497.0 481.7 L491.1 485.7 L487.2 489.6 L489.2 497.4 L495.0 507.2 L502.9 515.0 L509.7 520.9 L518.5 530.7 L525.4 534.6 L524.4 538.5 L516.6 534.6 L512.6 540.5 L515.6 546.4 L512.6 555.2 L506.8 554.2 L510.7 548.3 L507.8 544.4 L506.8 534.6 L499.0 528.7 L489.2 522.9 L481.3 515.0 L475.5 505.2 L471.5 497.4 L465.7 492.5 L457.8 493.5 L454.8 491.3 L454.8 483.2 Z" fill="#6097c9"/><path d="M482.3 552.2 L489.2 554.2 L502.9 552.2 L501.9 556.1 L499.9 565.9 L495.0 563.9 L487.2 559.1 L483.3 556.1 Z" fill="#6097c9"/><path d="M457.8 522.9 L464.7 521.9 L465.7 528.7 L464.7 538.5 L457.8 539.5 L455.9 534.6 L457.8 528.7 Z" fill="#6097c9"/><path d="M462.7 508.2 L466.6 507.2 L466.6 515.0 L463.7 518.9 L461.7 515.0 Z" fill="#6097c9"/><path d="M452.1 472.4 L458.9 464.3 L464.3 461.6 L473.7 463.6 L476.4 468.3 L475.1 476.4 L469.7 479.1 L464.3 475.1 L457.5 476.4 Z" fill="#deebf7"/><path d="M476.4 468.3 L479.1 465.6 L487.2 465.6 L494.0 464.3 L496.7 461.6 L494.5 457.5 L499.4 455.5 L503.4 457.5 L512.9 456.2 L518.3 458.9 L519.6 462.9 L516.9 467.0 L518.3 475.1 L514.2 477.8 L504.8 479.1 L496.7 477.8 L489.9 472.4 L476.4 473.7 Z" fill="#dde9f7"/><path d="M470.7 409.6 L475.4 407.2 L480.1 404.8 L481.3 398.3 L486.0 399.5 L489.6 403.7 L493.1 406.6 L500.2 404.8 L504.3 403.7 L507.3 409.6 L507.3 419.0 L508.4 428.0 L508.3 436.0 L503.1 440.9 L497.0 442.5 L494.5 447.0 L499.4 455.5 L494.5 457.5 L496.7 461.6 L494.0 464.3 L487.2 465.6 L479.1 465.6 L473.7 462.9 L464.3 461.6 L466.5 456.0 L468.3 450.8 L465.7 446.3 L460.2 443.5 L459.5 437.2 L462.4 430.0 L467.1 419.0 Z" fill="#2e75b6"/></g><g fill="#83aed5"><ellipse cx="416" cy="524.5" rx="3.2" ry="1.6"/><ellipse cx="423.5" cy="523" rx="1.5" ry="1"/><ellipse cx="244.6" cy="562.8" rx="1.6" ry="1"/><ellipse cx="250.8" cy="569.4" rx="1.3" ry="1.2"/><path d="M261.5 573 L266 570 L265 572.5Z" stroke="#83aed5" stroke-width="1"/><ellipse cx="269.3" cy="568.9" rx="1.8" ry="0.9"/></g></g><rect x="395" y="74.2" width="1.6" height="11" fill="url(#tg345)"/><rect x="394" y="71.2" width="5" height="0.8" fill="#555555"/><rect x="397" y="74.7" width="6" height="0.8" fill="#555555"/><rect x="397" y="84.7" width="6" height="0.8" fill="#555555"/><rect x="371" y="99.7" width="10" height="0.8" fill="#555555"/><rect x="383" y="99.5" width="6" height="1.2" fill="#555555"/></svg>
<div style="position:absolute;left:415.3px;top:65.7px;width:60.6px;height:36px;background:#050505;"></div>
<svg width="766" height="593" style="position:absolute;left:0;top:0"><defs><linearGradient id="tg415" x1="0" y1="0" x2="0" y2="1"><stop offset="0" stop-color="#2e75b6"/><stop offset="1" stop-color="#deebf7"/></linearGradient></defs><rect x="442.3" y="68.2" width="8" height="1.3" fill="#bbbbbb" opacity="0.8"/><g transform="translate(411.25,61.16) scale(0.061,0.066)"><g fill="#333333" stroke="none"><path d="M521.1 189.2 L527.0 189.8 L531.6 189.2 L534.8 190.5 L536.8 193.7 L541.4 197.7 L546.6 200.9 L549.2 203.5 L545.9 206.8 L542.0 203.5 L538.1 199.0 L534.8 202.9 L532.9 209.4 L531.6 212.0 L528.3 209.4 L526.4 206.2 L525.7 202.2 L523.7 198.3 L521.8 193.7 Z"/><path d="M538.1 188.5 L544.6 186.6 L553.8 188.5 L551.2 191.8 L546.0 193.1 L540.1 191.1 Z"/><path d="M385.2 255.2 L393.3 252.6 L394.3 259.2 L399.3 260.7 L403.4 263.3 L413.5 264.8 L416.0 269.3 L417.6 276.4 L412.5 282.5 L400.4 284.5 L391.2 282.5 L386.2 274.4 L381.1 271.4 L385.7 267.3 L381.6 261.8 L390.2 262.3 Z"/><path d="M420.6 352.1 L426.6 349.1 L433.5 350.6 L434.2 355.2 L428.1 359.7 L436.5 361.3 L435.7 367.3 L431.2 371.9 L426.6 374.9 L431.2 379.5 L432.7 388.6 L435.0 397.7 L438.8 406.8 L441.8 409.8 L440.3 415.9 L435.7 419.0 L428.1 422.0 L417.5 422.0 L408.4 419.0 L397.8 420.5 L402.3 415.9 L409.9 412.9 L414.5 409.8 L405.4 406.8 L406.9 402.3 L411.4 397.7 L417.5 393.1 L420.6 388.6 L419.0 385.6 L416.0 382.5 L414.5 378.0 L417.5 373.4 L416.0 370.4 L419.0 364.3 L417.5 358.2 Z"/><path d="M387.1 376.4 L397.8 374.9 L402.3 371.9 L407.6 374.2 L409.9 380.2 L407.6 384.0 L405.4 391.6 L399.3 397.7 L390.2 399.2 L382.6 397.7 L378.8 394.7 L382.6 388.6 L385.6 382.5 Z"/><path d="M516.0 285.0 L523.0 279.0 L533.0 273.5 L540.0 269.5 L548.0 264.5 L556.0 260.0 L561.5 258.2 L567.1 258.6 L573.4 262.5 L570.3 267.2 L567.1 276.6 L568.7 284.5 L573.4 290.7 L571.8 300.1 L575.0 309.5 L578.1 318.9 L582.8 328.3 L583.6 334.6 L580.7 338.0 L572.6 350.2 L564.3 355.3 L556.4 356.3 L548.0 355.0 L544.1 347.2 L543.6 339.9 L545.2 328.3 L551.5 315.8 L557.7 309.5 L557.7 304.8 L553.0 303.3 L548.3 304.8 L543.6 312.7 L538.9 323.6 L532.7 331.5 L528.0 339.9 L526.9 344.0 L528.2 350.3 L533.3 355.3 L529.5 362.9 L524.4 369.2 L521.9 378.1 L520.6 388.2 L515.6 393.3 L506.7 395.8 L504.2 393.3 L502.9 386.9 L501.7 378.1 L499.1 366.7 L498.5 362.9 L496.6 355.3 L495.3 360.4 L490.3 365.4 L481.4 368.0 L476.4 365.4 L472.6 360.4 L474.5 350.3 L474.5 341.0 L478.0 331.0 L484.0 324.5 L493.5 318.9 L501.3 312.7 L507.6 304.8 L513.9 295.4 Z"/><path d="M443.5 430.0 L448.3 423.7 L456.5 414.3 L463.6 409.6 L470.7 409.6 L475.4 407.2 L480.1 404.8 L481.3 398.3 L480.1 383.6 L484.8 377.7 L491.9 374.7 L493.1 383.6 L490.7 389.5 L487.2 394.2 L486.0 399.5 L489.6 403.7 L493.1 406.6 L500.2 404.8 L504.3 403.7 L508.5 408.5 L519.3 405.1 L527.4 404.4 L534.1 407.1 L542.2 407.8 L548.3 406.9 L544.3 398.8 L543.3 388.7 L546.3 378.6 L556.4 382.6 L552.4 372.5 L555.4 363.4 L564.5 360.4 L573.6 360.4 L574.6 376.5 L576.7 390.7 L588.8 392.7 L592.4 400.1 L597.4 408.2 L602.5 412.3 L596.4 420.4 L608.6 421.4 L614.6 426.4 L618.7 432.5 L626.8 436.5 L638.9 436.5 L649.0 438.6 L652.1 450.7 L646.4 455.0 L644.8 459.7 L637.0 466.0 L630.7 470.7 L626.8 474.6 L630.7 480.1 L634.6 481.6 L638.6 479.3 L637.8 481.6 L633.9 483.2 L627.6 486.3 L623.7 491.0 L621.3 490.2 L622.1 484.8 L615.8 484.0 L614.3 481.6 L619.8 477.7 L612.7 476.1 L609.6 474.6 L608.0 472.2 L605.7 474.6 L601.7 475.4 L597.8 481.6 L596.3 486.3 L593.9 492.6 L591.1 495.0 L591.1 504.4 L586.4 510.7 L588.0 516.9 L579.8 523.1 L577.6 528.1 L573.2 526.4 L566.6 528.6 L561.1 530.8 L556.8 531.9 L556.2 534.6 L557.9 538.5 L556.8 542.9 L561.1 547.2 L564.4 550.5 L563.3 553.8 L560.0 552.7 L556.8 550.5 L554.6 551.6 L557.9 557.1 L559.0 560.4 L556.8 562.6 L555.7 568.0 L552.4 565.9 L548.0 562.6 L545.8 558.2 L544.7 556.0 L548.0 553.8 L543.6 551.6 L540.3 547.2 L537.0 541.8 L534.9 537.4 L532.7 533.0 L532.1 527.5 L533.2 521.0 L530.5 516.6 L527.2 513.3 L526.4 511.1 L518.5 505.2 L508.7 497.4 L500.9 489.6 L497.0 481.7 L491.1 485.7 L487.2 489.6 L489.2 497.4 L495.0 507.2 L502.9 515.0 L509.7 520.9 L518.5 530.7 L525.4 534.6 L524.4 538.5 L516.6 534.6 L512.6 540.5 L515.6 546.4 L512.6 555.2 L506.8 554.2 L510.7 548.3 L507.8 544.4 L506.8 534.6 L499.0 528.7 L489.2 522.9 L481.3 515.0 L475.5 505.2 L471.5 497.4 L465.7 492.5 L457.8 493.5 L454.8 491.3 L455.6 493.7 L447.2 500.0 L436.6 493.7 L430.3 495.8 L426.1 502.2 L424.0 504.3 L417.7 510.6 L409.3 516.9 L398.7 523.2 L396.6 529.5 L388.2 535.9 L375.6 538.0 L360.8 540.1 L348.2 533.8 L344.0 525.3 L346.1 521.1 L333.4 521.1 L336.6 508.5 L337.6 497.9 L344.0 487.4 L350.3 481.1 L352.4 470.6 L367.1 472.7 L384.0 479.0 L398.7 485.3 L402.9 479.0 L405.0 468.5 L407.2 462.1 L408.2 457.9 L406.1 449.5 L403.0 443.2 L396.6 441.1 L395.6 435.8 L409.3 435.8 L415.6 430.5 L417.7 435.8 L426.1 434.7 L438.8 426.3 L443.0 424.2 Z"/><ellipse cx="489" cy="394.5" rx="2.5" ry="2.5"/><ellipse cx="497.8" cy="394.5" rx="3.8" ry="3.6"/><ellipse cx="531.4" cy="378.7" rx="1.4" ry="3" transform="rotate(20 531.4 378.7)"/><path d="M414 351 L417 349.5 L414.5 360 L412.5 368 L411 374 L410.5 368 L412 358Z"/><ellipse cx="578.7" cy="544.3" rx="1.8" ry="1.2"/><ellipse cx="577.8" cy="550.8" rx="1" ry="1.4"/><ellipse cx="571.5" cy="538" rx="1.2" ry="0.9"/><ellipse cx="594" cy="572" rx="2" ry="1"/><ellipse cx="573" cy="562" rx="1" ry="1"/></g><g stroke="#000" stroke-width="2" stroke-linejoin="round"><path d="M395.6 435.8 L409.3 435.8 L415.6 430.5 L417.7 435.8 L426.1 434.7 L438.8 426.3 L443.0 424.2 L449.3 434.0 L455.6 441.0 L460.2 443.5 L465.7 446.3 L468.3 450.8 L466.5 456.0 L464.3 461.6 L458.9 464.3 L452.1 472.4 L457.5 476.4 L454.8 483.2 L454.8 491.3 L455.6 493.7 L447.2 500.0 L436.6 493.7 L430.3 495.8 L426.1 502.2 L415.6 497.9 L409.1 494.9 L398.7 485.3 L402.9 479.0 L405.0 468.5 L407.2 462.1 L408.2 457.9 L406.1 449.5 L403.0 443.2 L396.6 441.1 Z" fill="#558fc4"/><path d="M352.4 470.6 L367.1 472.7 L384.0 479.0 L398.7 485.3 L409.1 494.9 L415.6 497.9 L426.1 502.2 L424.0 504.3 L417.7 510.6 L409.3 516.9 L398.7 523.2 L396.6 529.5 L388.2 535.9 L375.6 538.0 L360.8 540.1 L348.2 533.8 L344.0 525.3 L346.1 521.1 L350.3 514.8 L354.5 504.3 L358.7 493.7 L364.0 489.5 L359.8 483.2 L350.3 481.1 Z" fill="#83aed5"/><path d="M350.3 481.1 L359.8 483.2 L364.0 489.5 L358.7 493.7 L354.5 504.3 L350.3 514.8 L346.1 521.1 L333.4 521.1 L336.6 508.5 L337.6 497.9 L344.0 487.4 Z" fill="#d8e7f5"/><path d="M456.2 476.4 L464.3 475.1 L469.7 479.1 L475.1 476.4 L476.4 473.7 L489.9 472.4 L496.7 477.8 L497.0 481.7 L491.1 485.7 L487.2 489.6 L489.2 497.4 L495.0 507.2 L502.9 515.0 L509.7 520.9 L518.5 530.7 L525.4 534.6 L524.4 538.5 L516.6 534.6 L512.6 540.5 L515.6 546.4 L512.6 555.2 L506.8 554.2 L510.7 548.3 L507.8 544.4 L506.8 534.6 L499.0 528.7 L489.2 522.9 L481.3 515.0 L475.5 505.2 L471.5 497.4 L465.7 492.5 L457.8 493.5 L454.8 491.3 L454.8 483.2 Z" fill="#6097c9"/><path d="M482.3 552.2 L489.2 554.2 L502.9 552.2 L501.9 556.1 L499.9 565.9 L495.0 563.9 L487.2 559.1 L483.3 556.1 Z" fill="#6097c9"/><path d="M457.8 522.9 L464.7 521.9 L465.7 528.7 L464.7 538.5 L457.8 539.5 L455.9 534.6 L457.8 528.7 Z" fill="#6097c9"/><path d="M462.7 508.2 L466.6 507.2 L466.6 515.0 L463.7 518.9 L461.7 515.0 Z" fill="#6097c9"/><path d="M452.1 472.4 L458.9 464.3 L464.3 461.6 L473.7 463.6 L476.4 468.3 L475.1 476.4 L469.7 479.1 L464.3 475.1 L457.5 476.4 Z" fill="#deebf7"/><path d="M476.4 468.3 L479.1 465.6 L487.2 465.6 L494.0 464.3 L496.7 461.6 L494.5 457.5 L499.4 455.5 L503.4 457.5 L512.9 456.2 L518.3 458.9 L519.6 462.9 L516.9 467.0 L518.3 475.1 L514.2 477.8 L504.8 479.1 L496.7 477.8 L489.9 472.4 L476.4 473.7 Z" fill="#dde9f7"/><path d="M470.7 409.6 L475.4 407.2 L480.1 404.8 L481.3 398.3 L486.0 399.5 L489.6 403.7 L493.1 406.6 L500.2 404.8 L504.3 403.7 L507.3 409.6 L507.3 419.0 L508.4 428.0 L508.3 436.0 L503.1 440.9 L497.0 442.5 L494.5 447.0 L499.4 455.5 L494.5 457.5 L496.7 461.6 L494.0 464.3 L487.2 465.6 L479.1 465.6 L473.7 462.9 L464.3 461.6 L466.5 456.0 L468.3 450.8 L465.7 446.3 L460.2 443.5 L459.5 437.2 L462.4 430.0 L467.1 419.0 Z" fill="#2e75b6"/></g><g fill="#83aed5"><ellipse cx="416" cy="524.5" rx="3.2" ry="1.6"/><ellipse cx="423.5" cy="523" rx="1.5" ry="1"/><ellipse cx="244.6" cy="562.8" rx="1.6" ry="1"/><ellipse cx="250.8" cy="569.4" rx="1.3" ry="1.2"/><path d="M261.5 573 L266 570 L265 572.5Z" stroke="#83aed5" stroke-width="1"/><ellipse cx="269.3" cy="568.9" rx="1.8" ry="0.9"/></g></g><rect x="465.3" y="74.2" width="1.6" height="11" fill="url(#tg415)"/><rect x="464.3" y="71.2" width="5" height="0.8" fill="#bbbbbb"/><rect x="467.3" y="74.7" width="6" height="0.8" fill="#bbbbbb"/><rect x="467.3" y="84.7" width="6" height="0.8" fill="#bbbbbb"/><rect x="441.3" y="99.7" width="10" height="0.8" fill="#bbbbbb"/><rect x="453.3" y="99.5" width="6" height="1.2" fill="#bbbbbb"/></svg>
<div style="position:absolute;left:483px;top:60.5px;width:11px;height:46px;background:#f1f1f1;border:1px solid #c6c6c6;"></div>
<div style="position:absolute;left:483.5px;top:61px;width:10px;height:15px;background:#e1e1e1;"></div>
<div style="position:absolute;left:483.5px;top:76.5px;width:10px;height:14.5px;background:#e1e1e1;"></div>
<div style="position:absolute;left:483.5px;top:91px;width:10px;height:15px;background:#ffffff;"></div>
<svg width="766" height="593" style="position:absolute;left:0;top:0">
<path d="M486.5 70 l2 -2 l2 2" fill="none" stroke="#9a9a9a" stroke-width="0.9"/>
<path d="M486.5 83 l2 2 l2 -2" fill="none" stroke="#9a9a9a" stroke-width="0.9"/>
<path d="M486 96.5 h5 M486 98.5 h5 l-2.5 2.5z" stroke="#444" stroke-width="0.9" fill="#444"/>
<path d="M77.3 104 h4 l-2 2.2z M121.5 104 h4 l-2 2.2z M191.5 104 h4 l-2 2.2z" fill="#555"/><path d="M750.8 104 h4 l-2 2.2z" fill="#b5b5b5"/>
</svg>
<div style="position:absolute;left:750.8px;top:104px;width:0px;height:0px;background:transparent;"></div>
<div style="position:absolute;left:17.40px;top:88.90px;font-size:9.6px;line-height:9.6px;color:#444444;white-space:nowrap;transform-origin:0 0;transform:scaleX(0.9550);-webkit-text-stroke-width:0.2px;">Diagrammelement</div>
<div style="position:absolute;left:29.60px;top:100.70px;font-size:9.6px;line-height:9.6px;color:#444444;white-space:nowrap;transform-origin:0 0;transform:scaleX(0.9558);-webkit-text-stroke-width:0.2px;">hinzufügen</div>
<div style="position:absolute;left:96.70px;top:88.90px;font-size:9.6px;line-height:9.6px;color:#444444;white-space:nowrap;transform-origin:0 0;transform:scaleX(0.9509);-webkit-text-stroke-width:0.2px;">Schnelllayout</div>
<div style="position:absolute;left:165.60px;top:88.90px;font-size:9.6px;line-height:9.6px;color:#444444;white-space:nowrap;transform-origin:0 0;transform:scaleX(0.9008);-webkit-text-stroke-width:0.2px;">Farben</div>
<div style="position:absolute;left:162.00px;top:100.70px;font-size:9.6px;line-height:9.6px;color:#444444;white-space:nowrap;transform-origin:0 0;transform:scaleX(0.9032);-webkit-text-stroke-width:0.2px;">ändern</div>
<div style="position:absolute;left:278.60px;top:115.98px;font-size:8.4px;line-height:8.4px;color:#555555;white-space:nowrap;transform-origin:0 0;transform:scaleX(1.0510);-webkit-text-stroke-width:0.35px;">Diagrammformatvorlagen</div>
<div style="position:absolute;left:504.80px;top:89.10px;font-size:9.6px;line-height:9.6px;color:#9a9a9a;white-space:nowrap;transform-origin:0 0;transform:scaleX(0.9350);-webkit-text-stroke-width:0.2px;">Zeile/Spalte</div>
<div style="position:absolute;left:510.00px;top:100.80px;font-size:9.6px;line-height:9.6px;color:#9a9a9a;white-space:nowrap;transform-origin:0 0;transform:scaleX(0.9395);-webkit-text-stroke-width:0.2px;">wechseln</div>
<div style="position:absolute;left:566.50px;top:89.10px;font-size:9.6px;line-height:9.6px;color:#444444;white-space:nowrap;transform-origin:0 0;transform:scaleX(0.9017);-webkit-text-stroke-width:0.2px;">Daten</div>
<div style="position:absolute;left:556.50px;top:100.80px;font-size:9.6px;line-height:9.6px;color:#444444;white-space:nowrap;transform-origin:0 0;transform:scaleX(0.9259);-webkit-text-stroke-width:0.2px;">auswählen</div>
<div style="position:absolute;left:540.40px;top:115.98px;font-size:8.4px;line-height:8.4px;color:#555555;white-space:nowrap;transform-origin:0 0;transform:scaleX(1.0305);-webkit-text-stroke-width:0.35px;">Daten</div>
<div style="position:absolute;left:609.80px;top:89.30px;font-size:9.6px;line-height:9.6px;color:#444444;white-space:nowrap;transform-origin:0 0;transform:scaleX(0.9758);-webkit-text-stroke-width:0.2px;">Diagrammtyp</div>
<div style="position:absolute;left:623.40px;top:101.30px;font-size:9.6px;line-height:9.6px;color:#444444;white-space:nowrap;transform-origin:0 0;transform:scaleX(0.9567);-webkit-text-stroke-width:0.2px;">ändern</div>
<div style="position:absolute;left:632.00px;top:115.98px;font-size:8.4px;line-height:8.4px;color:#555555;white-space:nowrap;transform-origin:0 0;transform:scaleX(0.9158);-webkit-text-stroke-width:0.35px;">Typ</div>
<div style="position:absolute;left:679.80px;top:89.30px;font-size:9.6px;line-height:9.6px;color:#444444;white-space:nowrap;transform-origin:0 0;transform:scaleX(0.9644);-webkit-text-stroke-width:0.2px;">Diagramm</div>
<div style="position:absolute;left:676.30px;top:101.30px;font-size:9.6px;line-height:9.6px;color:#444444;white-space:nowrap;transform-origin:0 0;transform:scaleX(0.9330);-webkit-text-stroke-width:0.2px;">verschieben</div>
<div style="position:absolute;left:694.30px;top:115.98px;font-size:8.4px;line-height:8.4px;color:#555555;white-space:nowrap;transform-origin:0 0;transform:scaleX(1.0545);-webkit-text-stroke-width:0.35px;">Ort</div>
<div style="position:absolute;left:735.50px;top:89.30px;font-size:9.6px;line-height:9.6px;color:#a8a8a8;white-space:nowrap;transform-origin:0 0;transform:scaleX(0.9113);-webkit-text-stroke-width:0.2px;">Sortieren</div>
<div style="position:absolute;left:735.50px;top:115.98px;font-size:8.4px;line-height:8.4px;color:#6a6a6a;white-space:nowrap;transform-origin:0 0;transform:scaleX(1.0415);-webkit-text-stroke-width:0.35px;">Sortieren</div>
<div style="position:absolute;left:13px;top:178px;width:750px;height:413px;background:#ffffff;"></div>
<div style="position:absolute;left:13px;top:178px;width:19px;height:413px;background:#e6e6e6;"></div>
<div style="position:absolute;left:31.5px;top:154px;width:1px;height:437px;background:#c6c6c6;"></div>
<div style="position:absolute;left:92.5px;top:162px;width:1px;height:16px;background:#c6c6c6;"></div>
<div style="position:absolute;left:160.0px;top:162px;width:1px;height:16px;background:#c6c6c6;"></div>
<div style="position:absolute;left:222.2px;top:162px;width:1px;height:16px;background:#c6c6c6;"></div>
<div style="position:absolute;left:283.2px;top:162px;width:1px;height:16px;background:#c6c6c6;"></div>
<div style="position:absolute;left:344.2px;top:162px;width:1px;height:16px;background:#c6c6c6;"></div>
<div style="position:absolute;left:405.2px;top:162px;width:1px;height:16px;background:#c6c6c6;"></div>
<div style="position:absolute;left:466.1px;top:162px;width:1px;height:16px;background:#c6c6c6;"></div>
<div style="position:absolute;left:527.0px;top:162px;width:1px;height:16px;background:#c6c6c6;"></div>
<div style="position:absolute;left:588.5px;top:162px;width:1px;height:16px;background:#c6c6c6;"></div>
<div style="position:absolute;left:649.9px;top:162px;width:1px;height:16px;background:#c6c6c6;"></div>
<div style="position:absolute;left:710.8px;top:162px;width:1px;height:16px;background:#c6c6c6;"></div>
<div style="position:absolute;left:771.5px;top:162px;width:1px;height:16px;background:#c6c6c6;"></div>
<div style="position:absolute;left:52.5px;top:165.0px;width:20px;text-align:center;font-size:9.5px;line-height:10px;color:#333;-webkit-text-stroke-width:0.2px">A</div>
<div style="position:absolute;left:116.8px;top:165.0px;width:20px;text-align:center;font-size:9.5px;line-height:10px;color:#333;-webkit-text-stroke-width:0.2px">B</div>
<div style="position:absolute;left:181.6px;top:165.0px;width:20px;text-align:center;font-size:9.5px;line-height:10px;color:#333;-webkit-text-stroke-width:0.2px">C</div>
<div style="position:absolute;left:243.2px;top:165.0px;width:20px;text-align:center;font-size:9.5px;line-height:10px;color:#333;-webkit-text-stroke-width:0.2px">D</div>
<div style="position:absolute;left:304.2px;top:165.0px;width:20px;text-align:center;font-size:9.5px;line-height:10px;color:#333;-webkit-text-stroke-width:0.2px">E</div>
<div style="position:absolute;left:365.2px;top:165.0px;width:20px;text-align:center;font-size:9.5px;line-height:10px;color:#333;-webkit-text-stroke-width:0.2px">F</div>
<div style="position:absolute;left:426.1px;top:165.0px;width:20px;text-align:center;font-size:9.5px;line-height:10px;color:#333;-webkit-text-stroke-width:0.2px">G</div>
<div style="position:absolute;left:487.1px;top:165.0px;width:20px;text-align:center;font-size:9.5px;line-height:10px;color:#333;-webkit-text-stroke-width:0.2px">H</div>
<div style="position:absolute;left:548.2px;top:165.0px;width:20px;text-align:center;font-size:9.5px;line-height:10px;color:#333;-webkit-text-stroke-width:0.2px">I</div>
<div style="position:absolute;left:609.7px;top:165.0px;width:20px;text-align:center;font-size:9.5px;line-height:10px;color:#333;-webkit-text-stroke-width:0.2px">J</div>
<div style="position:absolute;left:670.8px;top:165.0px;width:20px;text-align:center;font-size:9.5px;line-height:10px;color:#333;-webkit-text-stroke-width:0.2px">K</div>
<div style="position:absolute;left:731.6px;top:165.0px;width:20px;text-align:center;font-size:9.5px;line-height:10px;color:#333;-webkit-text-stroke-width:0.2px">L</div>
<div style="position:absolute;left:32px;top:192.61px;width:731px;height:1px;background:#dadada;"></div>
<div style="position:absolute;left:13px;top:192.61px;width:19px;height:1px;background:#c6c6c6;"></div>
<div style="position:absolute;left:13px;top:180.5px;width:19px;text-align:center;font-size:9.5px;line-height:10px;color:#333;-webkit-text-stroke-width:0.25px">1</div>
<div style="position:absolute;left:32px;top:207.92000000000002px;width:731px;height:1px;background:#dadada;"></div>
<div style="position:absolute;left:13px;top:207.92000000000002px;width:19px;height:1px;background:#c6c6c6;"></div>
<div style="position:absolute;left:13px;top:195.8px;width:19px;text-align:center;font-size:9.5px;line-height:10px;color:#333;-webkit-text-stroke-width:0.25px">2</div>
<div style="position:absolute;left:32px;top:223.23000000000002px;width:731px;height:1px;background:#dadada;"></div>
<div style="position:absolute;left:13px;top:223.23000000000002px;width:19px;height:1px;background:#c6c6c6;"></div>
<div style="position:absolute;left:13px;top:211.1px;width:19px;text-align:center;font-size:9.5px;line-height:10px;color:#333;-webkit-text-stroke-width:0.25px">3</div>
<div style="position:absolute;left:32px;top:238.54000000000002px;width:731px;height:1px;background:#dadada;"></div>
<div style="position:absolute;left:13px;top:238.54000000000002px;width:19px;height:1px;background:#c6c6c6;"></div>
<div style="position:absolute;left:13px;top:226.4px;width:19px;text-align:center;font-size:9.5px;line-height:10px;color:#333;-webkit-text-stroke-width:0.25px">4</div>
<div style="position:absolute;left:32px;top:253.85000000000002px;width:731px;height:1px;background:#dadada;"></div>
<div style="position:absolute;left:13px;top:253.85000000000002px;width:19px;height:1px;background:#c6c6c6;"></div>
<div style="position:absolute;left:13px;top:241.7px;width:19px;text-align:center;font-size:9.5px;line-height:10px;color:#333;-webkit-text-stroke-width:0.25px">5</div>
<div style="position:absolute;left:32px;top:269.16px;width:731px;height:1px;background:#dadada;"></div>
<div style="position:absolute;left:13px;top:269.16px;width:19px;height:1px;background:#c6c6c6;"></div>
<div style="position:absolute;left:13px;top:257.0px;width:19px;text-align:center;font-size:9.5px;line-height:10px;color:#333;-webkit-text-stroke-width:0.25px">6</div>
<div style="position:absolute;left:32px;top:284.47px;width:731px;height:1px;background:#dadada;"></div>
<div style="position:absolute;left:13px;top:284.47px;width:19px;height:1px;background:#c6c6c6;"></div>
<div style="position:absolute;left:13px;top:272.3px;width:19px;text-align:center;font-size:9.5px;line-height:10px;color:#333;-webkit-text-stroke-width:0.25px">7</div>
<div style="position:absolute;left:32px;top:299.78000000000003px;width:731px;height:1px;background:#dadada;"></div>
<div style="position:absolute;left:13px;top:299.78000000000003px;width:19px;height:1px;background:#c6c6c6;"></div>
<div style="position:absolute;left:13px;top:287.6px;width:19px;text-align:center;font-size:9.5px;line-height:10px;color:#333;-webkit-text-stroke-width:0.25px">8</div>
<div style="position:absolute;left:32px;top:315.09000000000003px;width:731px;height:1px;background:#dadada;"></div>
<div style="position:absolute;left:13px;top:315.09000000000003px;width:19px;height:1px;background:#c6c6c6;"></div>
<div style="position:absolute;left:13px;top:302.9px;width:19px;text-align:center;font-size:9.5px;line-height:10px;color:#333;-webkit-text-stroke-width:0.25px">9</div>
<div style="position:absolute;left:32px;top:330.4px;width:731px;height:1px;background:#dadada;"></div>
<div style="position:absolute;left:13px;top:330.4px;width:19px;height:1px;background:#c6c6c6;"></div>
<div style="position:absolute;left:13px;top:318.2px;width:19px;text-align:center;font-size:9.5px;line-height:10px;color:#333;-webkit-text-stroke-width:0.25px">10</div>
<div style="position:absolute;left:32px;top:345.71000000000004px;width:731px;height:1px;background:#dadada;"></div>
<div style="position:absolute;left:13px;top:345.71000000000004px;width:19px;height:1px;background:#c6c6c6;"></div>
<div style="position:absolute;left:13px;top:333.6px;width:19px;text-align:center;font-size:9.5px;line-height:10px;color:#333;-webkit-text-stroke-width:0.25px">11</div>
<div style="position:absolute;left:32px;top:361.02px;width:731px;height:1px;background:#dadada;"></div>
<div style="position:absolute;left:13px;top:361.02px;width:19px;height:1px;background:#c6c6c6;"></div>
<div style="position:absolute;left:13px;top:348.9px;width:19px;text-align:center;font-size:9.5px;line-height:10px;color:#333;-webkit-text-stroke-width:0.25px">12</div>
<div style="position:absolute;left:32px;top:376.33000000000004px;width:731px;height:1px;background:#dadada;"></div>
<div style="position:absolute;left:13px;top:376.33000000000004px;width:19px;height:1px;background:#c6c6c6;"></div>
<div style="position:absolute;left:13px;top:364.2px;width:19px;text-align:center;font-size:9.5px;line-height:10px;color:#333;-webkit-text-stroke-width:0.25px">13</div>
<div style="position:absolute;left:32px;top:391.64px;width:731px;height:1px;background:#dadada;"></div>
<div style="position:absolute;left:13px;top:391.64px;width:19px;height:1px;background:#c6c6c6;"></div>
<div style="position:absolute;left:13px;top:379.5px;width:19px;text-align:center;font-size:9.5px;line-height:10px;color:#333;-webkit-text-stroke-width:0.25px">14</div>
<div style="position:absolute;left:32px;top:406.95000000000005px;width:731px;height:1px;background:#dadada;"></div>
<div style="position:absolute;left:13px;top:406.95000000000005px;width:19px;height:1px;background:#c6c6c6;"></div>
<div style="position:absolute;left:13px;top:394.8px;width:19px;text-align:center;font-size:9.5px;line-height:10px;color:#333;-webkit-text-stroke-width:0.25px">15</div>
<div style="position:absolute;left:32px;top:422.26px;width:731px;height:1px;background:#dadada;"></div>
<div style="position:absolute;left:13px;top:422.26px;width:19px;height:1px;background:#c6c6c6;"></div>
<div style="position:absolute;left:13px;top:410.1px;width:19px;text-align:center;font-size:9.5px;line-height:10px;color:#333;-webkit-text-stroke-width:0.25px">16</div>
<div style="position:absolute;left:32px;top:437.57px;width:731px;height:1px;background:#dadada;"></div>
<div style="position:absolute;left:13px;top:437.57px;width:19px;height:1px;background:#c6c6c6;"></div>
<div style="position:absolute;left:13px;top:425.4px;width:19px;text-align:center;font-size:9.5px;line-height:10px;color:#333;-webkit-text-stroke-width:0.25px">17</div>
<div style="position:absolute;left:32px;top:452.88px;width:731px;height:1px;background:#dadada;"></div>
<div style="position:absolute;left:13px;top:452.88px;width:19px;height:1px;background:#c6c6c6;"></div>
<div style="position:absolute;left:13px;top:440.7px;width:19px;text-align:center;font-size:9.5px;line-height:10px;color:#333;-webkit-text-stroke-width:0.25px">18</div>
<div style="position:absolute;left:32px;top:468.19px;width:731px;height:1px;background:#dadada;"></div>
<div style="position:absolute;left:13px;top:468.19px;width:19px;height:1px;background:#c6c6c6;"></div>
<div style="position:absolute;left:13px;top:456.0px;width:19px;text-align:center;font-size:9.5px;line-height:10px;color:#333;-webkit-text-stroke-width:0.25px">19</div>
<div style="position:absolute;left:32px;top:483.5px;width:731px;height:1px;background:#dadada;"></div>
<div style="position:absolute;left:13px;top:483.5px;width:19px;height:1px;background:#c6c6c6;"></div>
<div style="position:absolute;left:13px;top:471.3px;width:19px;text-align:center;font-size:9.5px;line-height:10px;color:#333;-webkit-text-stroke-width:0.25px">20</div>
<div style="position:absolute;left:32px;top:498.81px;width:731px;height:1px;background:#dadada;"></div>
<div style="position:absolute;left:13px;top:498.81px;width:19px;height:1px;background:#c6c6c6;"></div>
<div style="position:absolute;left:13px;top:486.7px;width:19px;text-align:center;font-size:9.5px;line-height:10px;color:#333;-webkit-text-stroke-width:0.25px">21</div>
<div style="position:absolute;left:32px;top:514.12px;width:731px;height:1px;background:#dadada;"></div>
<div style="position:absolute;left:13px;top:514.12px;width:19px;height:1px;background:#c6c6c6;"></div>
<div style="position:absolute;left:13px;top:502.0px;width:19px;text-align:center;font-size:9.5px;line-height:10px;color:#333;-webkit-text-stroke-width:0.25px">22</div>
<div style="position:absolute;left:32px;top:529.4300000000001px;width:731px;height:1px;background:#dadada;"></div>
<div style="position:absolute;left:13px;top:529.4300000000001px;width:19px;height:1px;background:#c6c6c6;"></div>
<div style="position:absolute;left:13px;top:517.3px;width:19px;text-align:center;font-size:9.5px;line-height:10px;color:#333;-webkit-text-stroke-width:0.25px">23</div>
<div style="position:absolute;left:32px;top:544.74px;width:731px;height:1px;background:#dadada;"></div>
<div style="position:absolute;left:13px;top:544.74px;width:19px;height:1px;background:#c6c6c6;"></div>
<div style="position:absolute;left:13px;top:532.6px;width:19px;text-align:center;font-size:9.5px;line-height:10px;color:#333;-webkit-text-stroke-width:0.25px">24</div>
<div style="position:absolute;left:32px;top:560.05px;width:731px;height:1px;background:#dadada;"></div>
<div style="position:absolute;left:13px;top:560.05px;width:19px;height:1px;background:#c6c6c6;"></div>
<div style="position:absolute;left:13px;top:547.9px;width:19px;text-align:center;font-size:9.5px;line-height:10px;color:#333;-webkit-text-stroke-width:0.25px">25</div>
<div style="position:absolute;left:32px;top:575.36px;width:731px;height:1px;background:#dadada;"></div>
<div style="position:absolute;left:13px;top:575.36px;width:19px;height:1px;background:#c6c6c6;"></div>
<div style="position:absolute;left:13px;top:563.2px;width:19px;text-align:center;font-size:9.5px;line-height:10px;color:#333;-webkit-text-stroke-width:0.25px">26</div>
<div style="position:absolute;left:32px;top:590.6700000000001px;width:731px;height:1px;background:#dadada;"></div>
<div style="position:absolute;left:13px;top:590.6700000000001px;width:19px;height:1px;background:#c6c6c6;"></div>
<div style="position:absolute;left:13px;top:578.5px;width:19px;text-align:center;font-size:9.5px;line-height:10px;color:#333;-webkit-text-stroke-width:0.25px">27</div>
<div style="position:absolute;left:92.5px;top:178px;width:1px;height:413px;background:#dadada;"></div>
<div style="position:absolute;left:160.0px;top:178px;width:1px;height:413px;background:#dadada;"></div>
<div style="position:absolute;left:222.2px;top:178px;width:1px;height:413px;background:#dadada;"></div>
<div style="position:absolute;left:283.2px;top:178px;width:1px;height:413px;background:#dadada;"></div>
<div style="position:absolute;left:344.2px;top:178px;width:1px;height:413px;background:#dadada;"></div>
<div style="position:absolute;left:405.2px;top:178px;width:1px;height:413px;background:#dadada;"></div>
<div style="position:absolute;left:466.1px;top:178px;width:1px;height:413px;background:#dadada;"></div>
<div style="position:absolute;left:527.0px;top:178px;width:1px;height:413px;background:#dadada;"></div>
<div style="position:absolute;left:588.5px;top:178px;width:1px;height:413px;background:#dadada;"></div>
<div style="position:absolute;left:649.9px;top:178px;width:1px;height:413px;background:#dadada;"></div>
<div style="position:absolute;left:710.8px;top:178px;width:1px;height:413px;background:#dadada;"></div>
<div style="position:absolute;left:771.5px;top:178px;width:1px;height:413px;background:#dadada;"></div>
<svg width="766" height="593" style="position:absolute;left:0;top:0"><path d="M30 162 v14 h-12 z" fill="#c0c0c0"/></svg>
<div style="position:absolute;left:32.5px;top:224.23000000000002px;width:60.5px;height:14.81px;background:#d4d1dd;"></div>
<div style="position:absolute;left:93.5px;top:224.23000000000002px;width:66.5px;height:14.81px;background:#cdd3de;"></div>
<div style="position:absolute;left:32.5px;top:239.54000000000002px;width:60.5px;height:14.81px;background:#eeecf4;"></div>
<div style="position:absolute;left:93.5px;top:239.54000000000002px;width:66.5px;height:14.81px;background:#e6ebf4;"></div>
<div style="position:absolute;left:32.5px;top:254.85000000000002px;width:60.5px;height:14.81px;background:#d4d1dd;"></div>
<div style="position:absolute;left:93.5px;top:254.85000000000002px;width:66.5px;height:14.81px;background:#cdd3de;"></div>
<div style="position:absolute;left:32.5px;top:270.16px;width:60.5px;height:14.81px;background:#eeecf4;"></div>
<div style="position:absolute;left:93.5px;top:270.16px;width:66.5px;height:14.81px;background:#e6ebf4;"></div>
<div style="position:absolute;left:32.5px;top:285.47px;width:60.5px;height:14.81px;background:#d4d1dd;"></div>
<div style="position:absolute;left:93.5px;top:285.47px;width:66.5px;height:14.81px;background:#cdd3de;"></div>
<div style="position:absolute;left:32.5px;top:300.78000000000003px;width:60.5px;height:14.81px;background:#eeecf4;"></div>
<div style="position:absolute;left:93.5px;top:300.78000000000003px;width:66.5px;height:14.81px;background:#e6ebf4;"></div>
<div style="position:absolute;left:32.5px;top:316.09000000000003px;width:60.5px;height:14.81px;background:#d4d1dd;"></div>
<div style="position:absolute;left:93.5px;top:316.09000000000003px;width:66.5px;height:14.81px;background:#cdd3de;"></div>
<div style="position:absolute;left:32px;top:207.62px;width:61px;height:1.6px;background:#000000;"></div>
<div style="position:absolute;left:32.5px;top:208.92000000000002px;width:60.5px;height:14.81px;background:#4472c4;"></div>
<div style="position:absolute;left:93.5px;top:208.92000000000002px;width:67px;height:14.81px;background:#4472c4;"></div>
<div style="position:absolute;left:79.8px;top:209px;width:11.5px;height:12.3px;background:#f3f3f3;border:1px solid #d0d0d0;"></div>
<svg width="766" height="593" style="position:absolute;left:0;top:0"><path d="M82.5 213.5 h6 l-3 3.5z" fill="#555"/></svg>
<div style="position:absolute;left:33.90px;top:181.69px;font-size:9.2px;line-height:9.2px;color:#000000;font-weight:bold;white-space:nowrap;transform-origin:0 0;transform:scaleX(1.1000);-webkit-text-stroke-width:0.1px;">Länderinformationen</div>
<div style="position:absolute;left:33.90px;top:211.29px;font-size:9.2px;line-height:9.2px;color:#ffffff;font-weight:bold;white-space:nowrap;transform-origin:0 0;transform:scaleX(1.1000);-webkit-text-stroke-width:0.1px;">Land</div>
<div style="position:absolute;left:95.00px;top:211.29px;font-size:9.2px;line-height:9.2px;color:#ffffff;font-weight:bold;white-space:nowrap;transform-origin:0 0;transform:scaleX(1.1000);-webkit-text-stroke-width:0.1px;">Einwohner</div>
<div style="position:absolute;left:33.90px;top:227.98px;font-size:9.2px;line-height:9.2px;color:#333333;white-space:nowrap;transform-origin:0 0;transform:scaleX(1.1300);-webkit-text-stroke-width:0.15px;">Deutschland</div>
<div style="position:absolute;left:109.55px;top:227.98px;font-size:9.2px;line-height:9.2px;color:#333333;white-space:nowrap;transform-origin:0 0;transform:scaleX(1.0500);-webkit-text-stroke-width:0.15px;">81.890.000</div>
<div style="position:absolute;left:33.90px;top:243.29px;font-size:9.2px;line-height:9.2px;color:#333333;white-space:nowrap;transform-origin:0 0;transform:scaleX(1.1300);-webkit-text-stroke-width:0.15px;">Österreich</div>
<div style="position:absolute;left:114.92px;top:243.29px;font-size:9.2px;line-height:9.2px;color:#333333;white-space:nowrap;transform-origin:0 0;transform:scaleX(1.0500);-webkit-text-stroke-width:0.15px;">8.462.000</div>
<div style="position:absolute;left:33.90px;top:258.60px;font-size:9.2px;line-height:9.2px;color:#333333;white-space:nowrap;transform-origin:0 0;transform:scaleX(1.1300);-webkit-text-stroke-width:0.15px;">Schweiz</div>
<div style="position:absolute;left:114.92px;top:258.60px;font-size:9.2px;line-height:9.2px;color:#333333;white-space:nowrap;transform-origin:0 0;transform:scaleX(1.0500);-webkit-text-stroke-width:0.15px;">8.139.000</div>
<div style="position:absolute;left:33.90px;top:273.91px;font-size:9.2px;line-height:9.2px;color:#333333;white-space:nowrap;transform-origin:0 0;transform:scaleX(1.1300);-webkit-text-stroke-width:0.15px;">Frankreich</div>
<div style="position:absolute;left:109.55px;top:273.91px;font-size:9.2px;line-height:9.2px;color:#333333;white-space:nowrap;transform-origin:0 0;transform:scaleX(1.0500);-webkit-text-stroke-width:0.15px;">65.697.000</div>
<div style="position:absolute;left:33.90px;top:289.22px;font-size:9.2px;line-height:9.2px;color:#333333;white-space:nowrap;transform-origin:0 0;transform:scaleX(1.1300);-webkit-text-stroke-width:0.15px;">Italien</div>
<div style="position:absolute;left:109.55px;top:289.22px;font-size:9.2px;line-height:9.2px;color:#333333;white-space:nowrap;transform-origin:0 0;transform:scaleX(1.0500);-webkit-text-stroke-width:0.15px;">60.918.000</div>
<div style="position:absolute;left:33.90px;top:304.53px;font-size:9.2px;line-height:9.2px;color:#333333;white-space:nowrap;transform-origin:0 0;transform:scaleX(1.1300);-webkit-text-stroke-width:0.15px;">Spanien</div>
<div style="position:absolute;left:109.55px;top:304.53px;font-size:9.2px;line-height:9.2px;color:#333333;white-space:nowrap;transform-origin:0 0;transform:scaleX(1.0500);-webkit-text-stroke-width:0.15px;">46.218.000</div>
<div style="position:absolute;left:33.90px;top:319.84px;font-size:9.2px;line-height:9.2px;color:#333333;white-space:nowrap;transform-origin:0 0;transform:scaleX(1.1300);-webkit-text-stroke-width:0.15px;">Portugal</div>
<div style="position:absolute;left:109.55px;top:319.84px;font-size:9.2px;line-height:9.2px;color:#333333;white-space:nowrap;transform-origin:0 0;transform:scaleX(1.0500);-webkit-text-stroke-width:0.15px;">10.524.000</div>
<div style="position:absolute;left:92.5px;top:222.5px;width:1.5px;height:108.39999999999998px;background:#8a5fd0;"></div>
<div style="position:absolute;left:32.5px;top:330.09999999999997px;width:61px;height:1.6px;background:#8a5fd0;"></div>
<div style="position:absolute;left:159.6px;top:222.5px;width:1.5px;height:108.39999999999998px;background:#4f86d8;"></div>
<div style="position:absolute;left:93px;top:330.09999999999997px;width:67.5px;height:1.6px;background:#4f86d8;"></div>
<div style="position:absolute;left:92.5px;top:206.5px;width:1.6px;height:17px;background:#e03838;"></div>
<div style="position:absolute;left:93px;top:206.6px;width:68px;height:1.6px;background:#e03838;"></div>
<div style="position:absolute;left:93px;top:222.6px;width:68px;height:1.6px;background:#e03838;"></div>
<div style="position:absolute;left:159.6px;top:206.6px;width:1.6px;height:17px;background:#e03838;"></div>
<div style="position:absolute;left:91.3px;top:205.6px;width:3.5px;height:3.5px;background:#d02a2a;"></div>
<div style="position:absolute;left:158.8px;top:221.8px;width:3.5px;height:3.5px;background:#d02a2a;"></div>
<div style="position:absolute;left:91.3px;top:221px;width:3.5px;height:3.5px;background:#8a5fd0;"></div>
<div style="position:absolute;left:91.5px;top:329.2px;width:3.5px;height:3.5px;background:#8a5fd0;"></div>
<div style="position:absolute;left:31.8px;top:221.3px;width:2px;height:2.5px;background:#8a5fd0;"></div>
<div style="position:absolute;left:158.8px;top:329.2px;width:3.5px;height:3.5px;background:#3b74d0;"></div>
<div style="position:absolute;left:175px;top:180.2px;width:584px;height:409.4px;background:#ffffff;"></div>
<svg width="766" height="593" style="position:absolute;left:0;top:0"><g fill="#dcdcdc" stroke="none"><path d="M521.1 189.2 L527.0 189.8 L531.6 189.2 L534.8 190.5 L536.8 193.7 L541.4 197.7 L546.6 200.9 L549.2 203.5 L545.9 206.8 L542.0 203.5 L538.1 199.0 L534.8 202.9 L532.9 209.4 L531.6 212.0 L528.3 209.4 L526.4 206.2 L525.7 202.2 L523.7 198.3 L521.8 193.7 Z"/><path d="M538.1 188.5 L544.6 186.6 L553.8 188.5 L551.2 191.8 L546.0 193.1 L540.1 191.1 Z"/><path d="M385.2 255.2 L393.3 252.6 L394.3 259.2 L399.3 260.7 L403.4 263.3 L413.5 264.8 L416.0 269.3 L417.6 276.4 L412.5 282.5 L400.4 284.5 L391.2 282.5 L386.2 274.4 L381.1 271.4 L385.7 267.3 L381.6 261.8 L390.2 262.3 Z"/><path d="M420.6 352.1 L426.6 349.1 L433.5 350.6 L434.2 355.2 L428.1 359.7 L436.5 361.3 L435.7 367.3 L431.2 371.9 L426.6 374.9 L431.2 379.5 L432.7 388.6 L435.0 397.7 L438.8 406.8 L441.8 409.8 L440.3 415.9 L435.7 419.0 L428.1 422.0 L417.5 422.0 L408.4 419.0 L397.8 420.5 L402.3 415.9 L409.9 412.9 L414.5 409.8 L405.4 406.8 L406.9 402.3 L411.4 397.7 L417.5 393.1 L420.6 388.6 L419.0 385.6 L416.0 382.5 L414.5 378.0 L417.5 373.4 L416.0 370.4 L419.0 364.3 L417.5 358.2 Z"/><path d="M387.1 376.4 L397.8 374.9 L402.3 371.9 L407.6 374.2 L409.9 380.2 L407.6 384.0 L405.4 391.6 L399.3 397.7 L390.2 399.2 L382.6 397.7 L378.8 394.7 L382.6 388.6 L385.6 382.5 Z"/><path d="M516.0 285.0 L523.0 279.0 L533.0 273.5 L540.0 269.5 L548.0 264.5 L556.0 260.0 L561.5 258.2 L567.1 258.6 L573.4 262.5 L570.3 267.2 L567.1 276.6 L568.7 284.5 L573.4 290.7 L571.8 300.1 L575.0 309.5 L578.1 318.9 L582.8 328.3 L583.6 334.6 L580.7 338.0 L572.6 350.2 L564.3 355.3 L556.4 356.3 L548.0 355.0 L544.1 347.2 L543.6 339.9 L545.2 328.3 L551.5 315.8 L557.7 309.5 L557.7 304.8 L553.0 303.3 L548.3 304.8 L543.6 312.7 L538.9 323.6 L532.7 331.5 L528.0 339.9 L526.9 344.0 L528.2 350.3 L533.3 355.3 L529.5 362.9 L524.4 369.2 L521.9 378.1 L520.6 388.2 L515.6 393.3 L506.7 395.8 L504.2 393.3 L502.9 386.9 L501.7 378.1 L499.1 366.7 L498.5 362.9 L496.6 355.3 L495.3 360.4 L490.3 365.4 L481.4 368.0 L476.4 365.4 L472.6 360.4 L474.5 350.3 L474.5 341.0 L478.0 331.0 L484.0 324.5 L493.5 318.9 L501.3 312.7 L507.6 304.8 L513.9 295.4 Z"/><path d="M443.5 430.0 L448.3 423.7 L456.5 414.3 L463.6 409.6 L470.7 409.6 L475.4 407.2 L480.1 404.8 L481.3 398.3 L480.1 383.6 L484.8 377.7 L491.9 374.7 L493.1 383.6 L490.7 389.5 L487.2 394.2 L486.0 399.5 L489.6 403.7 L493.1 406.6 L500.2 404.8 L504.3 403.7 L508.5 408.5 L519.3 405.1 L527.4 404.4 L534.1 407.1 L542.2 407.8 L548.3 406.9 L544.3 398.8 L543.3 388.7 L546.3 378.6 L556.4 382.6 L552.4 372.5 L555.4 363.4 L564.5 360.4 L573.6 360.4 L574.6 376.5 L576.7 390.7 L588.8 392.7 L592.4 400.1 L597.4 408.2 L602.5 412.3 L596.4 420.4 L608.6 421.4 L614.6 426.4 L618.7 432.5 L626.8 436.5 L638.9 436.5 L649.0 438.6 L652.1 450.7 L646.4 455.0 L644.8 459.7 L637.0 466.0 L630.7 470.7 L626.8 474.6 L630.7 480.1 L634.6 481.6 L638.6 479.3 L637.8 481.6 L633.9 483.2 L627.6 486.3 L623.7 491.0 L621.3 490.2 L622.1 484.8 L615.8 484.0 L614.3 481.6 L619.8 477.7 L612.7 476.1 L609.6 474.6 L608.0 472.2 L605.7 474.6 L601.7 475.4 L597.8 481.6 L596.3 486.3 L593.9 492.6 L591.1 495.0 L591.1 504.4 L586.4 510.7 L588.0 516.9 L579.8 523.1 L577.6 528.1 L573.2 526.4 L566.6 528.6 L561.1 530.8 L556.8 531.9 L556.2 534.6 L557.9 538.5 L556.8 542.9 L561.1 547.2 L564.4 550.5 L563.3 553.8 L560.0 552.7 L556.8 550.5 L554.6 551.6 L557.9 557.1 L559.0 560.4 L556.8 562.6 L555.7 568.0 L552.4 565.9 L548.0 562.6 L545.8 558.2 L544.7 556.0 L548.0 553.8 L543.6 551.6 L540.3 547.2 L537.0 541.8 L534.9 537.4 L532.7 533.0 L532.1 527.5 L533.2 521.0 L530.5 516.6 L527.2 513.3 L526.4 511.1 L518.5 505.2 L508.7 497.4 L500.9 489.6 L497.0 481.7 L491.1 485.7 L487.2 489.6 L489.2 497.4 L495.0 507.2 L502.9 515.0 L509.7 520.9 L518.5 530.7 L525.4 534.6 L524.4 538.5 L516.6 534.6 L512.6 540.5 L515.6 546.4 L512.6 555.2 L506.8 554.2 L510.7 548.3 L507.8 544.4 L506.8 534.6 L499.0 528.7 L489.2 522.9 L481.3 515.0 L475.5 505.2 L471.5 497.4 L465.7 492.5 L457.8 493.5 L454.8 491.3 L455.6 493.7 L447.2 500.0 L436.6 493.7 L430.3 495.8 L426.1 502.2 L424.0 504.3 L417.7 510.6 L409.3 516.9 L398.7 523.2 L396.6 529.5 L388.2 535.9 L375.6 538.0 L360.8 540.1 L348.2 533.8 L344.0 525.3 L346.1 521.1 L333.4 521.1 L336.6 508.5 L337.6 497.9 L344.0 487.4 L350.3 481.1 L352.4 470.6 L367.1 472.7 L384.0 479.0 L398.7 485.3 L402.9 479.0 L405.0 468.5 L407.2 462.1 L408.2 457.9 L406.1 449.5 L403.0 443.2 L396.6 441.1 L395.6 435.8 L409.3 435.8 L415.6 430.5 L417.7 435.8 L426.1 434.7 L438.8 426.3 L443.0 424.2 Z"/><ellipse cx="489" cy="394.5" rx="2.5" ry="2.5"/><ellipse cx="497.8" cy="394.5" rx="3.8" ry="3.6"/><ellipse cx="531.4" cy="378.7" rx="1.4" ry="3" transform="rotate(20 531.4 378.7)"/><path d="M414 351 L417 349.5 L414.5 360 L412.5 368 L411 374 L410.5 368 L412 358Z"/><ellipse cx="578.7" cy="544.3" rx="1.8" ry="1.2"/><ellipse cx="577.8" cy="550.8" rx="1" ry="1.4"/><ellipse cx="571.5" cy="538" rx="1.2" ry="0.9"/><ellipse cx="594" cy="572" rx="2" ry="1"/><ellipse cx="573" cy="562" rx="1" ry="1"/></g><g fill="none" stroke="#ffffff" stroke-width="0.55" stroke-opacity="0.9" stroke-linejoin="round"><path d="M564.0 265.7 L556.2 276.6 L543.6 273.5 L532.7 281.3 L524.8 290.7 L518.6 301.7 L513.9 315.8 L507.6 322.1 L506.7 325.0 L507.3 341.4 L505.4 350.3 L501.7 355.3 L499.1 361.7"/><path d="M549.9 279.8 L551.5 289.2 L551.5 301.7 L553.0 303.3"/><path d="M508.3 436.0 L516.6 442.2 L526.0 449.0 L534.1 453.0 L543.6 453.0 L550.3 458.4 L550.3 461.1"/><path d="M548.3 406.9 L555.7 411.2 L558.4 419.3 L555.7 426.0 L558.4 432.8 L558.4 440.9 L553.0 449.0 L550.3 461.1"/><path d="M527.4 453.0 L519.3 459.8 L516.0 461.0"/><path d="M519.3 459.8 L535.5 461.1 L549.0 462.5 L552.3 465.7 L560.9 464.3 L575.2 461.4 L578.1 462.9"/><path d="M557.4 430.2 L570.6 429.2 L586.8 431.2 L596.9 425.1"/><path d="M543.3 389.7 L560.5 388.7 L572.6 392.7 L568.6 400.8 L560.5 408.9 L555.7 411.2"/><path d="M552.4 374.0 L560.5 373.5 L573.6 378.6"/><path d="M576.2 461.0 L581.0 460.0 L587.0 466.0 L594.0 473.0 L597.0 478.0 L592.0 481.0 L589.0 487.0 L586.0 482.0 L583.0 472.0 L578.1 462.9"/><path d="M538.0 482.9 L543.7 492.9 L552.3 498.7 L555.2 503.0 L566.6 503.0 L578.1 500.1 L591.1 501.5"/><path d="M517.5 474.5 L509.3 481.5 L529.4 485.8 L538.0 482.9 L545.1 472.9 L552.3 465.7"/><path d="M497.0 484.0 L503.0 482.0 L509.3 481.5"/><path d="M505.0 489.5 L509.3 490.1 L529.4 491.5 L532.2 503.0 L526.5 507.3"/><path d="M528.0 508.7 L538.0 510.1 L545.1 514.4 L552.3 511.6 L553.7 503.0"/><path d="M540.8 520.2 L552.3 517.3 L556.6 523.0 L552.3 527.3 L542.3 527.3 L540.8 520.2"/><path d="M555.5 524.5 L566.0 522.5 L579.8 523.1"/><path d="M539.5 527.5 L541.4 531.9 L537.0 538.5"/><path d="M553.7 503.0 L553.7 510.0 L556.6 517.0 L556.6 523.0"/><path d="M533.0 520.0 L537.0 516.0 L540.8 520.2"/><path d="M448.3 423.7 L452.0 425.0 L458.0 424.5 L462.4 430.0"/><path d="M459.5 437.2 L456.0 440.0 L460.2 443.5"/><path d="M397.5 374.5 L401.0 378.0 L405.6 384.0"/></g><g stroke="#ffffff" stroke-width="0.6" stroke-linejoin="round"><path d="M395.6 435.8 L409.3 435.8 L415.6 430.5 L417.7 435.8 L426.1 434.7 L438.8 426.3 L443.0 424.2 L449.3 434.0 L455.6 441.0 L460.2 443.5 L465.7 446.3 L468.3 450.8 L466.5 456.0 L464.3 461.6 L458.9 464.3 L452.1 472.4 L457.5 476.4 L454.8 483.2 L454.8 491.3 L455.6 493.7 L447.2 500.0 L436.6 493.7 L430.3 495.8 L426.1 502.2 L415.6 497.9 L409.1 494.9 L398.7 485.3 L402.9 479.0 L405.0 468.5 L407.2 462.1 L408.2 457.9 L406.1 449.5 L403.0 443.2 L396.6 441.1 Z" fill="#558fc4"/><path d="M352.4 470.6 L367.1 472.7 L384.0 479.0 L398.7 485.3 L409.1 494.9 L415.6 497.9 L426.1 502.2 L424.0 504.3 L417.7 510.6 L409.3 516.9 L398.7 523.2 L396.6 529.5 L388.2 535.9 L375.6 538.0 L360.8 540.1 L348.2 533.8 L344.0 525.3 L346.1 521.1 L350.3 514.8 L354.5 504.3 L358.7 493.7 L364.0 489.5 L359.8 483.2 L350.3 481.1 Z" fill="#83aed5"/><path d="M350.3 481.1 L359.8 483.2 L364.0 489.5 L358.7 493.7 L354.5 504.3 L350.3 514.8 L346.1 521.1 L333.4 521.1 L336.6 508.5 L337.6 497.9 L344.0 487.4 Z" fill="#d8e7f5"/><path d="M456.2 476.4 L464.3 475.1 L469.7 479.1 L475.1 476.4 L476.4 473.7 L489.9 472.4 L496.7 477.8 L497.0 481.7 L491.1 485.7 L487.2 489.6 L489.2 497.4 L495.0 507.2 L502.9 515.0 L509.7 520.9 L518.5 530.7 L525.4 534.6 L524.4 538.5 L516.6 534.6 L512.6 540.5 L515.6 546.4 L512.6 555.2 L506.8 554.2 L510.7 548.3 L507.8 544.4 L506.8 534.6 L499.0 528.7 L489.2 522.9 L481.3 515.0 L475.5 505.2 L471.5 497.4 L465.7 492.5 L457.8 493.5 L454.8 491.3 L454.8 483.2 Z" fill="#6097c9"/><path d="M482.3 552.2 L489.2 554.2 L502.9 552.2 L501.9 556.1 L499.9 565.9 L495.0 563.9 L487.2 559.1 L483.3 556.1 Z" fill="#6097c9"/><path d="M457.8 522.9 L464.7 521.9 L465.7 528.7 L464.7 538.5 L457.8 539.5 L455.9 534.6 L457.8 528.7 Z" fill="#6097c9"/><path d="M462.7 508.2 L466.6 507.2 L466.6 515.0 L463.7 518.9 L461.7 515.0 Z" fill="#6097c9"/><path d="M452.1 472.4 L458.9 464.3 L464.3 461.6 L473.7 463.6 L476.4 468.3 L475.1 476.4 L469.7 479.1 L464.3 475.1 L457.5 476.4 Z" fill="#deebf7"/><path d="M476.4 468.3 L479.1 465.6 L487.2 465.6 L494.0 464.3 L496.7 461.6 L494.5 457.5 L499.4 455.5 L503.4 457.5 L512.9 456.2 L518.3 458.9 L519.6 462.9 L516.9 467.0 L518.3 475.1 L514.2 477.8 L504.8 479.1 L496.7 477.8 L489.9 472.4 L476.4 473.7 Z" fill="#dde9f7"/><path d="M470.7 409.6 L475.4 407.2 L480.1 404.8 L481.3 398.3 L486.0 399.5 L489.6 403.7 L493.1 406.6 L500.2 404.8 L504.3 403.7 L507.3 409.6 L507.3 419.0 L508.4 428.0 L508.3 436.0 L503.1 440.9 L497.0 442.5 L494.5 447.0 L499.4 455.5 L494.5 457.5 L496.7 461.6 L494.0 464.3 L487.2 465.6 L479.1 465.6 L473.7 462.9 L464.3 461.6 L466.5 456.0 L468.3 450.8 L465.7 446.3 L460.2 443.5 L459.5 437.2 L462.4 430.0 L467.1 419.0 Z" fill="#2e75b6"/></g><g fill="#83aed5"><ellipse cx="416" cy="524.5" rx="3.2" ry="1.6"/><ellipse cx="423.5" cy="523" rx="1.5" ry="1"/><ellipse cx="244.6" cy="562.8" rx="1.6" ry="1"/><ellipse cx="250.8" cy="569.4" rx="1.3" ry="1.2"/><path d="M261.5 573 L266 570 L265 572.5Z" stroke="#83aed5" stroke-width="1"/><ellipse cx="269.3" cy="568.9" rx="1.8" ry="0.9"/></g><rect x="175" y="180.2" width="583.6" height="409.3" fill="none" stroke="#8f8f8f" stroke-width="1.1"/><circle cx="175" cy="180.2" r="3.6" fill="#ffffff" stroke="#7a7a7a" stroke-width="1.3"/><circle cx="466.9" cy="180.2" r="3.6" fill="#ffffff" stroke="#7a7a7a" stroke-width="1.3"/><circle cx="758.6" cy="180.2" r="3.6" fill="#ffffff" stroke="#7a7a7a" stroke-width="1.3"/><circle cx="175" cy="384.8" r="3.6" fill="#ffffff" stroke="#7a7a7a" stroke-width="1.3"/><circle cx="758.6" cy="384.8" r="3.6" fill="#ffffff" stroke="#7a7a7a" stroke-width="1.3"/><circle cx="175" cy="589.5" r="3.6" fill="#ffffff" stroke="#7a7a7a" stroke-width="1.3"/><circle cx="466.9" cy="589.5" r="3.6" fill="#ffffff" stroke="#7a7a7a" stroke-width="1.3"/><circle cx="758.6" cy="589.5" r="3.6" fill="#ffffff" stroke="#7a7a7a" stroke-width="1.3"/><defs><linearGradient id="lg" x1="0" y1="0" x2="0" y2="1"><stop offset="0" stop-color="#2e75b6"/><stop offset="1" stop-color="#deebf7"/></linearGradient></defs><rect x="694.5" y="211.5" width="7.6" height="65.5" fill="url(#lg)"/></svg>
<div style="position:absolute;left:424.90px;top:188.33px;font-size:13px;line-height:13px;color:#595959;white-space:nowrap;transform-origin:0 0;transform:scaleX(1.0426);-webkit-text-stroke-width:0.25px;">Diagrammtitel</div>
<div style="position:absolute;left:691.50px;top:193.13px;font-size:8.3px;line-height:8.3px;color:#595959;white-space:nowrap;transform-origin:0 0;transform:scaleX(1.0071);-webkit-text-stroke-width:0.2px;">Einwohner</div>
<div style="position:absolute;left:706.20px;top:208.53px;font-size:8.3px;line-height:8.3px;color:#595959;white-space:nowrap;transform-origin:0 0;transform:scaleX(0.9966);-webkit-text-stroke-width:0.2px;">81.890.000</div>
<div style="position:absolute;left:706.20px;top:273.73px;font-size:8.3px;line-height:8.3px;color:#595959;white-space:nowrap;transform-origin:0 0;transform:scaleX(0.9912);-webkit-text-stroke-width:0.2px;">8.139.000</div>
<div style="position:absolute;left:463.90px;top:430.48px;font-size:7.8px;line-height:7.8px;color:#ffffff;white-space:nowrap;transform-origin:0 0;transform:scaleX(1.0118);-webkit-text-stroke-width:0.2px;">81.890.000</div>
<div style="position:absolute;left:411.80px;top:461.78px;font-size:7.8px;line-height:7.8px;color:#ffffff;white-space:nowrap;transform-origin:0 0;transform:scaleX(1.0221);-webkit-text-stroke-width:0.2px;">65.697.000</div>
<div style="position:absolute;left:358.00px;top:503.78px;font-size:7.8px;line-height:7.8px;color:#ffffff;white-space:nowrap;transform-origin:0 0;transform:scaleX(1.0246);-webkit-text-stroke-width:0.2px;">46.218.000</div>
<div style="position:absolute;left:497.10px;top:464.68px;font-size:7.8px;line-height:7.8px;color:#404040;white-space:nowrap;transform-origin:0 0;transform:scaleX(0.9065);-webkit-text-stroke-width:0.2px;">8.4…</div>
<div style="position:absolute;left:340.20px;top:503.78px;font-size:7.8px;line-height:7.8px;color:#404040;white-space:nowrap;transform-origin:0 0;transform:scaleX(0.7579);-webkit-text-stroke-width:0.2px;">1…</div>
<div style="position:absolute;left:479.80px;top:502.08px;font-size:7.8px;line-height:7.8px;color:#ffffff;white-space:nowrap;transform-origin:0 0;transform:scaleX(0.8403);-webkit-text-stroke-width:0.2px;">6…</div>
<div style="position:absolute;left:631.00px;top:570.95px;font-size:5px;line-height:5px;color:#777777;white-space:nowrap;transform-origin:0 0;transform:scaleX(1.1328);-webkit-text-stroke-width:0.2px;">Unterstützt von Bing</div>
<div style="position:absolute;left:534.00px;top:578.75px;font-size:5px;line-height:5px;color:#777777;white-space:nowrap;transform-origin:0 0;transform:scaleX(1.1015);-webkit-text-stroke-width:0.2px;">© DSAT for MSFT, GeoNames, Microsoft, Navteq, Wikipedia</div>
<div style="position:absolute;left:14.8px;top:111.2px;width:129.6px;height:57px;background:#ffffff;border:1px solid #cfcfcf;box-shadow:1px 2px 3px rgba(0,0,0,0.18);"></div>
<div style="position:absolute;left:17px;top:131.2px;width:126.2px;height:17.6px;background:#c4c4c4;"></div>
<div style="position:absolute;left:40.60px;top:116.94px;font-size:9.5px;line-height:9.5px;color:#606060;white-space:nowrap;transform-origin:0 0;transform:scaleX(0.9898);-webkit-text-stroke-width:0.25px;">Diagra<u>m</u>mtitel</div>
<div style="position:absolute;left:40.60px;top:135.15px;font-size:9.5px;line-height:9.5px;color:#363636;white-space:nowrap;transform-origin:0 0;transform:scaleX(0.9672);-webkit-text-stroke-width:0.3px;">Daten<u>b</u>eschriftungen</div>
<div style="position:absolute;left:40.60px;top:153.25px;font-size:9.5px;line-height:9.5px;color:#606060;white-space:nowrap;transform-origin:0 0;transform:scaleX(0.9166);-webkit-text-stroke-width:0.25px;">Lege<u>n</u>de</div>
<svg width="766" height="593" style="position:absolute;left:0;top:0">
<path d="M133.5 119 l3.5 2.7 l-3.5 2.7z M133.5 137.2 l3.5 2.7 l-3.5 2.7z M133.5 155.4 l3.5 2.7 l-3.5 2.7z" fill="#555"/>
<rect x="21.6" y="116.4" width="8.6" height="1.5" fill="#ed7d31"/>
<g fill="#f4f4f4" stroke="#6e6e6e" stroke-width="0.9">
 <rect x="22.5" y="121.5" width="2.3" height="4"/><rect x="24.8" y="119.3" width="2.3" height="6.2"/><rect x="27.1" y="121" width="2.3" height="4.5"/>
 <rect x="22.5" y="139.5" width="2.3" height="5"/><rect x="24.8" y="137.3" width="2.3" height="7.2"/><rect x="27.1" y="139" width="2.3" height="5.5"/>
 <rect x="20.5" y="158.5" width="2.3" height="5.5"/><rect x="22.8" y="157" width="2.3" height="7"/><rect x="25.1" y="159" width="2.3" height="5"/>
</g>
<g fill="#ed7d31"><rect x="22" y="138" width="1.6" height="1.4"/><rect x="25.3" y="134.6" width="1.6" height="1.4"/><rect x="28.3" y="137.5" width="1.6" height="1.4"/></g>
<rect x="26.3" y="152.6" width="6" height="6" fill="#fff" stroke="#ed7d31" stroke-width="1.1"/>
<path d="M28 155 h2.8 M28 157 h2.8" stroke="#ed7d31" stroke-width="0.6"/>
</svg>
<div style="position:absolute;left:143.5px;top:131.5px;width:199.1px;height:88.5px;background:#ffffff;border:1px solid #c8c8c8;box-shadow:1px 2px 3px rgba(0,0,0,0.18);"></div>
<div style="position:absolute;left:145px;top:166px;width:196.3px;height:33.5px;background:#c4c4c4;"></div>
<div style="position:absolute;left:145.5px;top:167.3px;width:31.3px;height:30.4px;background:#bcbcbc;border:1px solid #a9a9a9;"></div>
<div style="position:absolute;left:184.80px;top:144.54px;font-size:9.5px;line-height:9.5px;color:#606060;white-space:nowrap;transform-origin:0 0;transform:scaleX(0.8931);-webkit-text-stroke-width:0.25px;"><u>K</u>eine</div>
<div style="position:absolute;left:184.80px;top:178.44px;font-size:9.5px;line-height:9.5px;color:#363636;white-space:nowrap;transform-origin:0 0;transform:scaleX(0.9390);-webkit-text-stroke-width:0.3px;"><u>A</u>nzeigen</div>
<div style="position:absolute;left:168.40px;top:205.94px;font-size:9.5px;line-height:9.5px;color:#555555;white-space:nowrap;transform-origin:0 0;transform:scaleX(0.9621);-webkit-text-stroke-width:0.25px;"><u>W</u>eitere Datenbeschriftungsoptionen...</div>
<svg width="766" height="593" style="position:absolute;left:0;top:0">
<g fill="#fafafa" stroke="#8a8a8a" stroke-width="0.9">
 <rect x="152.4" y="146.2" width="3.4" height="12.7"/><rect x="156.8" y="141.5" width="3.8" height="17.4"/><rect x="162.2" y="145.4" width="3.8" height="13.5"/><rect x="166.9" y="148.3" width="3.8" height="10.6"/>
 <rect x="152.4" y="181.9" width="3.4" height="11.1"/><rect x="156.8" y="177.1" width="3.8" height="15.9"/><rect x="162.2" y="181" width="3.8" height="12"/><rect x="166.9" y="183.5" width="3.8" height="9.5"/>
</g>
<g fill="#ed7d31">
 <rect x="152.2" y="145.5" width="3.8" height="1.5"/><rect x="156.6" y="140.8" width="4.2" height="1.5"/><rect x="162" y="144.7" width="4.2" height="1.5"/><rect x="166.7" y="147.6" width="4.2" height="1.5"/>
 <rect x="152.6" y="186.6" width="3" height="1.5"/><rect x="157" y="184" width="3.4" height="1.5"/><rect x="162.4" y="185.8" width="3.4" height="1.5"/><rect x="167.1" y="187.4" width="3.4" height="1.5"/>
</g>
<path d="M166.5 138 l6.5 6 M173 138 l-6.5 6" stroke="#e0503a" stroke-width="1.4"/>
<path d="M284 188.5 v13.5 l3 -3 l2.2 4.5 l1.8 -0.9 l-2.1 -4.3 h4.3 z" fill="#ffffff" stroke="#222" stroke-width="0.9" stroke-linejoin="round"/>
</svg>
<div style="position:absolute;left:763px;top:5px;width:1px;height:588px;background:#ffffff;"></div>
<div style="position:absolute;left:764px;top:0px;width:2px;height:593px;background:#f9f9f9;"></div>
</body></html>
